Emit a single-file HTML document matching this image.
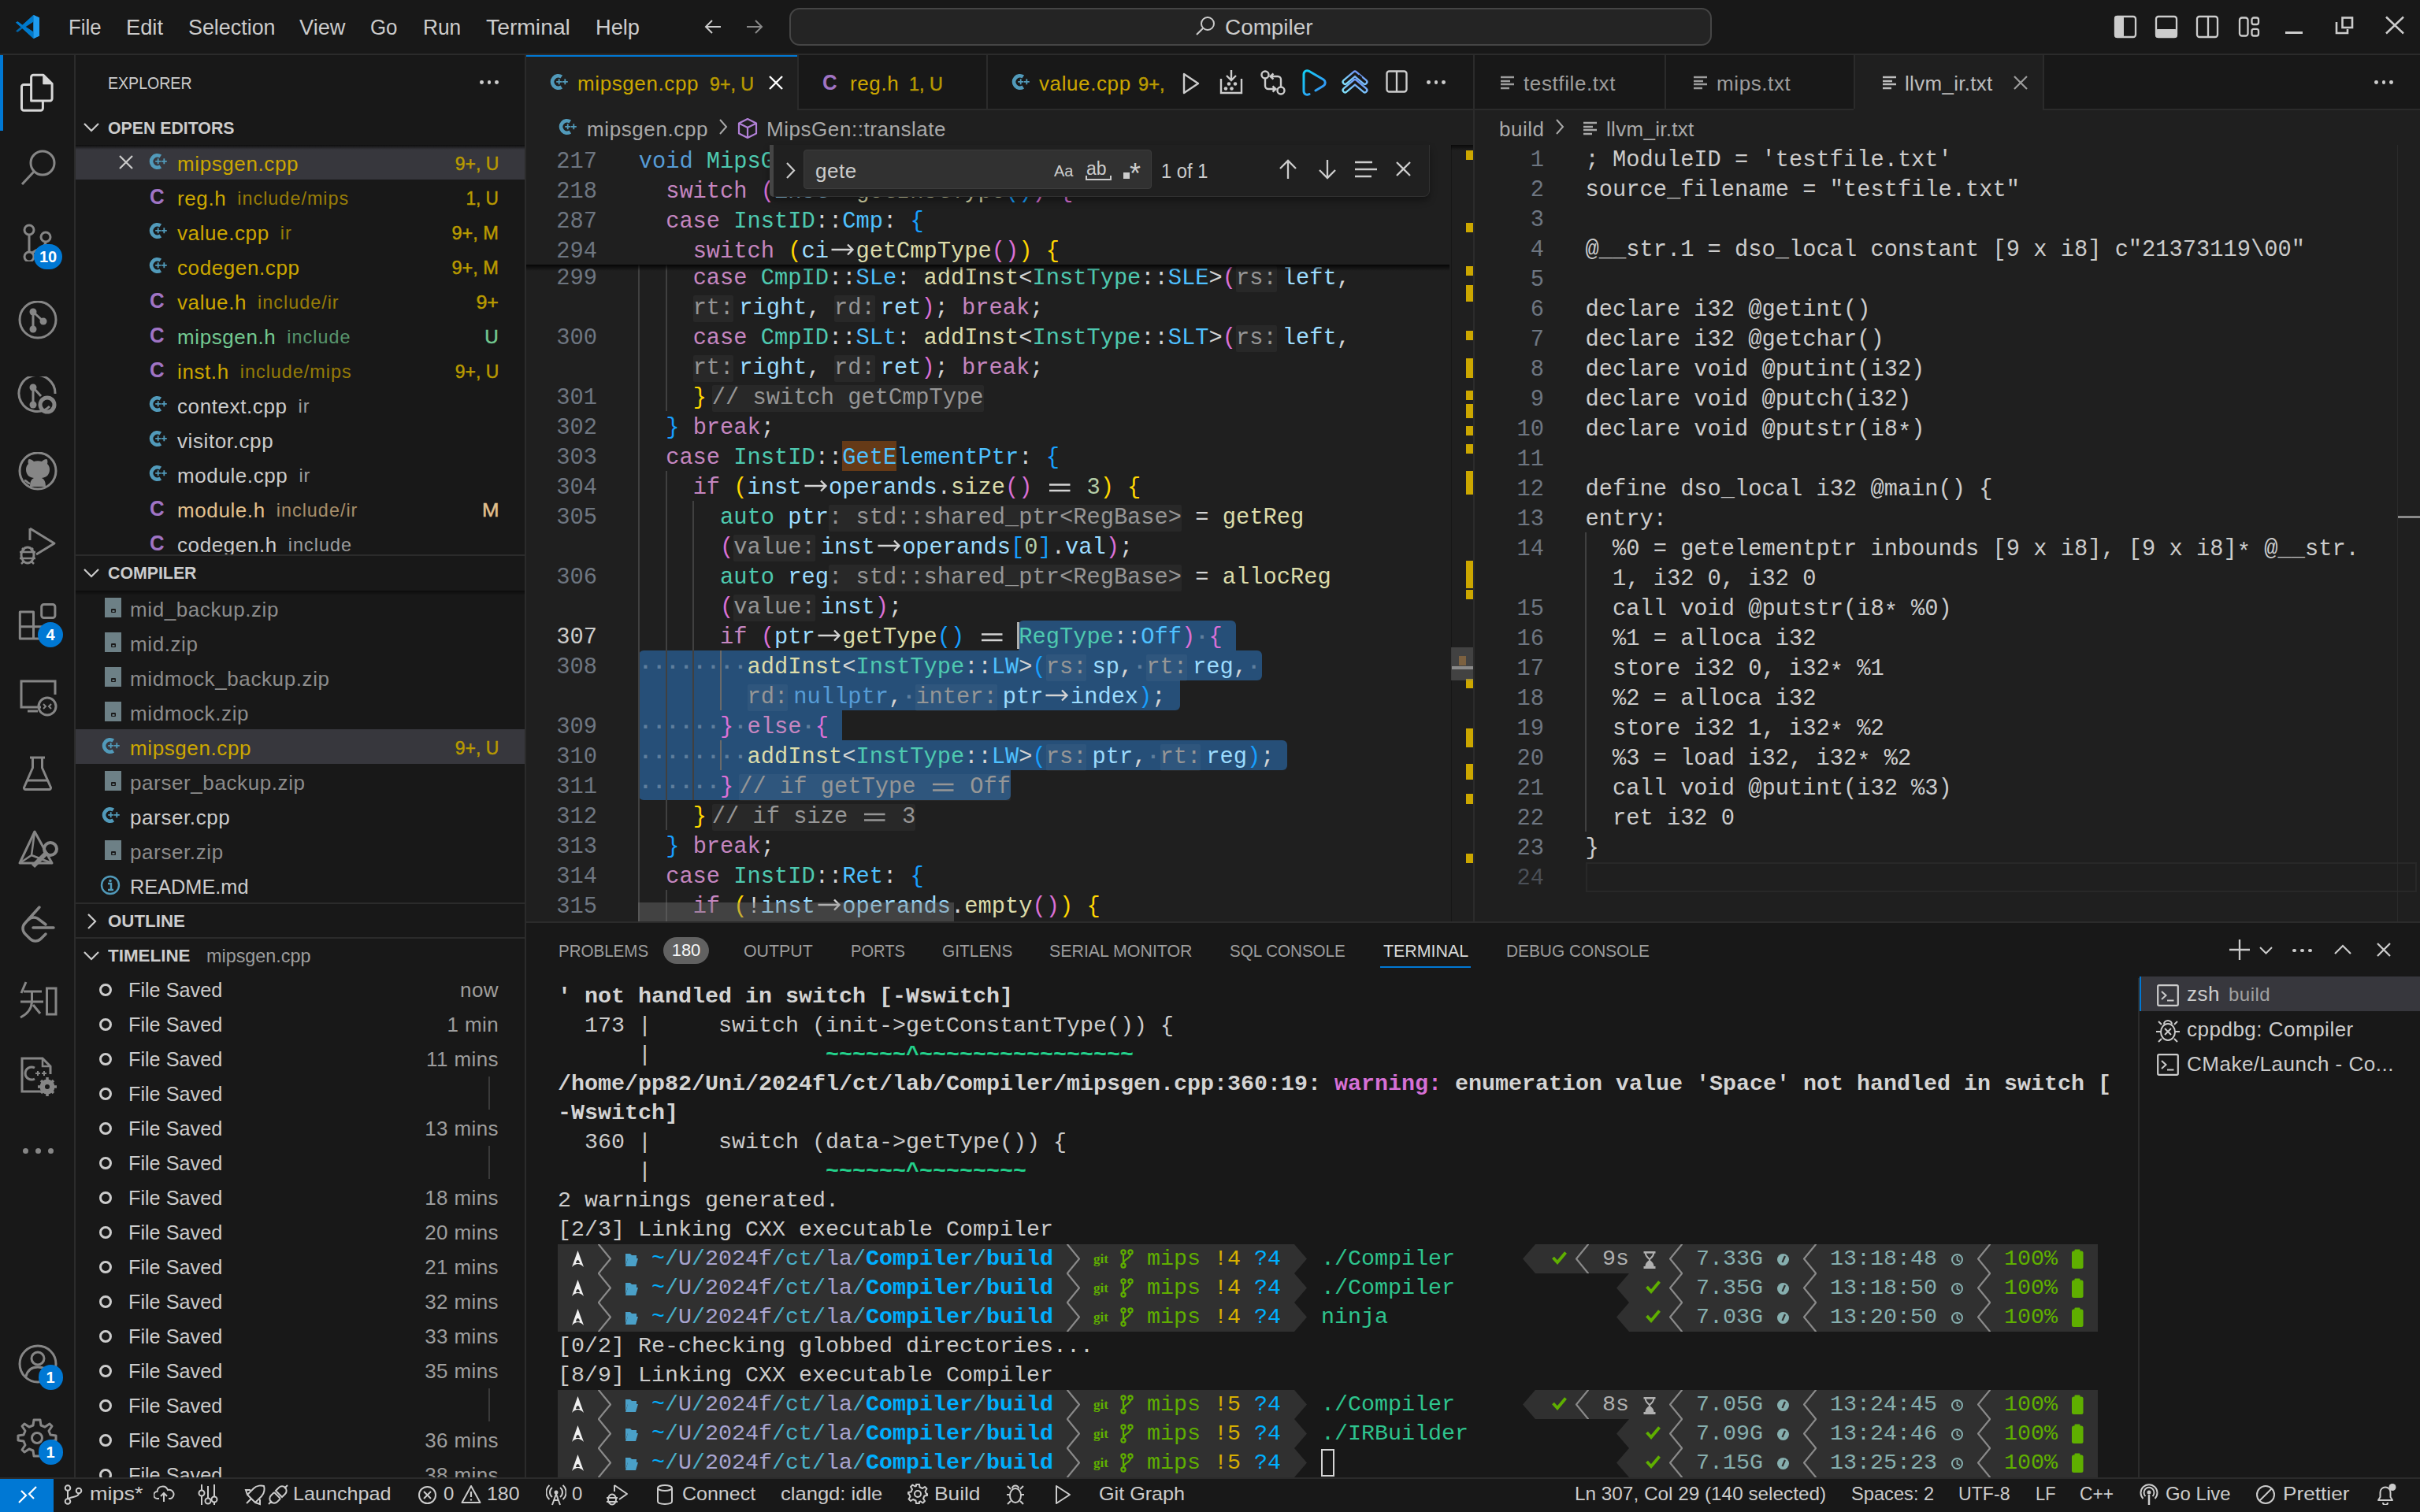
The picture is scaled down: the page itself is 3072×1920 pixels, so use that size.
<!DOCTYPE html>
<html><head><meta charset="utf-8"><title>VS Code</title><style>
html,body{margin:0;padding:0;}
body{width:3072px;height:1920px;position:relative;overflow:hidden;background:#181818;font-family:"Liberation Sans",sans-serif;}
.a{position:absolute;}
.t{white-space:pre;}
.cl{white-space:pre;font-family:"Liberation Mono",monospace;font-size:28.72px;line-height:38px;height:38px;color:#d4d4d4;padding-top:3px;box-sizing:border-box;}
.hlig{display:inline-block;width:34.46px;height:34px;vertical-align:top;position:relative;}
.hlig svg{position:absolute;left:0;top:-5px;}
.ast{position:relative;top:5px;}
.tl{white-space:pre;font-family:"Liberation Mono",monospace;font-size:28.33px;line-height:37px;height:37px;color:#cccccc;}
.kw{color:#c586c0}.ty{color:#4ec9b0}.en{color:#4fc1ff}.fn{color:#dcdcaa}.va{color:#9cdcfe}.nu{color:#b5cea8}.op{color:#d4d4d4}
.b1{color:#ffd700}.b2{color:#da70d6}.b3{color:#179fff}.bl{color:#569cd6}
.h{display:inline-block;height:34px;line-height:34px;background:rgba(255,255,255,0.045);color:#969696;border-radius:2px;vertical-align:baseline;position:relative;top:0px;}
.hp{margin-right:7px;}.hb{margin-left:7px;}
.ws{color:rgba(190,205,220,0.38);font-weight:bold;}
.lig{display:inline-block;width:34.46px;height:38px;vertical-align:top;position:relative;margin-top:-2px;}
.lig svg{position:absolute;left:0;top:0;}
</style></head><body>
<div class="a" style="left:0px;top:0px;width:3072px;height:68px;background:#181818;"></div>
<div class="a" style="left:0px;top:68px;width:3072px;height:2px;background:#2b2b2b;"></div>
<svg class="a" style="left:19px;top:18px;" width="32" height="32" viewBox="0 0 32 32" fill="none">
<path d="M23.5 1 L31 4.6 V27.4 L23.5 31 Z" fill="#1f9cf0"/>
<path d="M23.5 1 L9.5 13.8 L3.5 9.3 L1 10.6 L7.5 16 L1 21.4 L3.5 22.7 L9.5 18.2 L23.5 31 V22.5 L13.5 16 L23.5 9.5 Z" fill="#0065a9"/>
<path d="M23.5 1 L9.5 13.8 L3.5 9.3 L1 10.6 L23.5 31 V22.5 L13.5 16 L23.5 9.5Z" fill="#007acc"/>
<path d="M23.5 1 L31 4.6 V27.4 L23.5 31 Z" fill="#1f9cf0"/>
</svg>
<div class="a t" style="top:22.14px;font-size:27px;line-height:27px;color:#cccccc;left:87px;transform:scaleX(0.9539407522340029);transform-origin:left center;">File</div>
<div class="a t" style="top:22.14px;font-size:27px;line-height:27px;color:#cccccc;left:160px;transform:scaleX(1.0102231357218663);transform-origin:left center;">Edit</div>
<div class="a t" style="top:22.14px;font-size:27px;line-height:27px;color:#cccccc;left:239px;transform:scaleX(0.994894693379139);transform-origin:left center;">Selection</div>
<div class="a t" style="top:22.14px;font-size:27px;line-height:27px;color:#cccccc;left:380px;transform:scaleX(1.0080449743142386);transform-origin:left center;">View</div>
<div class="a t" style="top:22.14px;font-size:27px;line-height:27px;color:#cccccc;left:470px;transform:scaleX(0.957921726341546);transform-origin:left center;">Go</div>
<div class="a t" style="top:22.14px;font-size:27px;line-height:27px;color:#cccccc;left:537px;transform:scaleX(0.9731844280396239);transform-origin:left center;">Run</div>
<div class="a t" style="top:22.14px;font-size:27px;line-height:27px;color:#cccccc;left:617px;transform:scaleX(1.0478128958052872);transform-origin:left center;">Terminal</div>
<div class="a t" style="top:22.14px;font-size:27px;line-height:27px;color:#cccccc;left:756px;transform:scaleX(1.0085149729580667);transform-origin:left center;">Help</div>
<svg class="a" style="left:893px;top:22px;" width="24" height="24" viewBox="0 0 24 24" fill="none"><path d="M22 12H3 M11 4L3 12L11 20" stroke="#cccccc" stroke-width="2"/></svg>
<svg class="a" style="left:946px;top:22px;" width="24" height="24" viewBox="0 0 24 24" fill="none"><path d="M2 12H21 M13 4L21 12L13 20" stroke="#8a8a8a" stroke-width="2"/></svg>
<div class="a" style="left:1002px;top:10px;width:1171px;height:47.5px;box-sizing:border-box;background:#242424;border:2px solid #454545;border-radius:13px;"></div>
<svg class="a" style="left:1516px;top:19px;" width="28" height="28" viewBox="0 0 28 28" fill="none"><circle cx="17" cy="11" r="8" stroke="#cccccc" stroke-width="2"/><path d="M11 17L3 25" stroke="#cccccc" stroke-width="2"/></svg>
<div class="a t" style="top:22.14px;font-size:27px;line-height:27px;color:#cccccc;left:1555px;transform:scaleX(1.0322058047111746);transform-origin:left center;">Compiler</div>
<svg class="a" style="left:2683px;top:19px;" width="30" height="30" viewBox="0 0 30 30" fill="none"><rect x="2" y="2" width="26" height="26" rx="3" stroke="#cccccc" stroke-width="2.3"/><rect x="1" y="1" width="12" height="28" rx="3" fill="#cccccc"/></svg>
<svg class="a" style="left:2735px;top:19px;" width="30" height="30" viewBox="0 0 30 30" fill="none"><rect x="2" y="2" width="26" height="26" rx="3" stroke="#cccccc" stroke-width="2.3"/><rect x="1" y="18" width="28" height="11" rx="3" fill="#cccccc"/></svg>
<svg class="a" style="left:2787px;top:19px;" width="30" height="30" viewBox="0 0 30 30" fill="none"><rect x="2" y="2" width="26" height="26" rx="3" stroke="#cccccc" stroke-width="2.3"/><path d="M16 2V28" stroke="#cccccc" stroke-width="2.3"/></svg>
<svg class="a" style="left:2841px;top:21px;" width="28" height="28" viewBox="0 0 28 28" fill="none"><rect x="2" y="1.5" width="10.5" height="23" rx="3" stroke="#cccccc" stroke-width="2.3"/><rect x="17.5" y="1.5" width="8.5" height="8.5" rx="2.5" stroke="#cccccc" stroke-width="2.3"/><rect x="17.5" y="15.8" width="8.5" height="8.7" rx="2.5" stroke="#cccccc" stroke-width="2.3"/></svg>
<div class="a" style="left:2901px;top:40px;width:22px;height:3px;background:#cccccc;"></div>
<svg class="a" style="left:2964px;top:20px;" width="24" height="24" viewBox="0 0 24 24" fill="none"><rect x="9.5" y="2.5" width="12.5" height="12.5" stroke="#cccccc" stroke-width="2.6"/><path d="M2 8 V22 H16 V17" stroke="#cccccc" stroke-width="2.6" fill="none"/></svg>
<svg class="a" style="left:3028px;top:20px;" width="24" height="24" viewBox="0 0 24 24" fill="none"><path d="M1 1.5L23 22.5M23 1.5L1 22.5" stroke="#cccccc" stroke-width="2.6"/></svg>
<div class="a" style="left:0px;top:70px;width:94px;height:1806px;background:#181818;"></div>
<div class="a" style="left:94px;top:70px;width:2px;height:1806px;background:#2b2b2b;"></div>
<div class="a" style="left:0px;top:70px;width:4px;height:96px;background:#0078d4;"></div>
<svg class="a" style="left:22px;top:88px;" width="52" height="58" viewBox="0 0 52 58" fill="none"><path d="M17.6 40 V10 a2.7 2.7 0 0 1 2.7 -2.7 H33 L44.1 18.4 V37.3 a2.7 2.7 0 0 1 -2.7 2.7 Z" stroke="#d7d7d7" stroke-width="3" fill="none" stroke-linejoin="round"/><path d="M33 7.3 V18.4 H44.1 Z" fill="#d7d7d7" stroke="#d7d7d7" stroke-width="1.5" stroke-linejoin="round"/><path d="M17.6 19.4 H8.2 a2.7 2.7 0 0 0 -2.7 2.7 V49.5 a2.7 2.7 0 0 0 2.7 2.7 H29.7 a2.7 2.7 0 0 0 2.7 -2.7 V40" stroke="#d7d7d7" stroke-width="3" fill="none"/></svg>
<svg class="a" style="left:22px;top:186px;" width="52" height="52" viewBox="0 0 52 52" fill="none"><circle cx="32" cy="21" r="15" stroke="#868686" stroke-width="3"/><path d="M21 32 L6 48" stroke="#868686" stroke-width="3"/></svg>
<svg class="a" style="left:22px;top:280px;" width="52" height="52" viewBox="0 0 52 52" fill="none"><circle cx="15" cy="12" r="6" stroke="#868686" stroke-width="3"/><circle cx="36" cy="21" r="6" stroke="#868686" stroke-width="3"/><circle cx="15" cy="46" r="6" stroke="#868686" stroke-width="3"/><path d="M15 18 V40 M36 27 C36 35 24 36 18 42" stroke="#868686" stroke-width="3"/></svg>
<div class="a" style="left:43.0px;top:310px;width:36px;height:32px;border-radius:16px;background:#0078d4;color:#fff;font-size:20px;font-weight:bold;line-height:32px;text-align:center;">10</div>
<svg class="a" style="left:22px;top:382px;" width="52" height="52" viewBox="0 0 52 52" fill="none"><circle cx="26" cy="24" r="23" stroke="#868686" stroke-width="3"/><circle cx="20" cy="14" r="4.5" fill="#868686"/><circle cx="20" cy="36" r="4.5" fill="#868686"/><circle cx="33" cy="26" r="4.5" fill="#868686"/><path d="M20 14V36 M20 14 L33 26" stroke="#868686" stroke-width="3"/></svg>
<svg class="a" style="left:22px;top:478px;" width="52" height="52" viewBox="0 0 52 52" fill="none"><path d="M41 38 A23 23 0 1 1 48 22" stroke="#868686" stroke-width="3"/><circle cx="20" cy="14" r="4.5" fill="#868686"/><circle cx="20" cy="36" r="4.5" fill="#868686"/><path d="M20 14V36 M20 14 L30 25" stroke="#868686" stroke-width="3"/><circle cx="38" cy="36" r="9" stroke="#868686" stroke-width="5"/></svg>
<svg class="a" style="left:22px;top:574px;" width="52" height="52" viewBox="0 0 52 52" fill="none"><circle cx="26" cy="24" r="23" stroke="#868686" stroke-width="3"/><path d="M16 44 C16 36 19 34 21 33 C14 32 11 28 11 22 C11 19 12 17 14 15 C13 12 14 9 15 9 C17 9 19 10 21 12 C24 11 28 11 31 12 C33 10 35 9 37 9 C38 9 39 12 38 15 C40 17 41 19 41 22 C41 28 38 32 31 33 C33 34 36 36 36 44 Z" fill="#868686"/><path d="M9 36 C12 36 13 40 16 40" stroke="#868686" stroke-width="2.5"/></svg>
<svg class="a" style="left:22px;top:668px;" width="52" height="52" viewBox="0 0 52 52" fill="none"><path d="M16 3 L47 22 L24 36" stroke="#868686" stroke-width="3" fill="none" stroke-linejoin="round"/><path d="M16 3 V18" stroke="#868686" stroke-width="3"/><ellipse cx="13" cy="37" rx="8" ry="10" stroke="#868686" stroke-width="3"/><path d="M3 33H23 M3 41H23 M6 28 L9 31 M20 28 L17 31 M5 48 L8 45 M21 48 L18 45" stroke="#868686" stroke-width="2.5"/></svg>
<svg class="a" style="left:22px;top:764px;" width="52" height="52" viewBox="0 0 52 52" fill="none"><path d="M3.3 13 H20.5 V46.9 H3.3 Z M3.3 31.7 H40.5 V46.9 H20.5" stroke="#868686" stroke-width="3" fill="none" stroke-linejoin="round"/><rect x="30.7" y="3.5" width="17.2" height="17" rx="3" stroke="#868686" stroke-width="3"/></svg>
<div class="a" style="left:48.0px;top:790px;width:32px;height:32px;border-radius:16px;background:#0078d4;color:#fff;font-size:20px;font-weight:bold;line-height:32px;text-align:center;">4</div>
<svg class="a" style="left:22px;top:860px;" width="52" height="52" viewBox="0 0 52 52" fill="none"><path d="M30 38 H5 V5 H48 V22" stroke="#868686" stroke-width="3" fill="none"/><path d="M13 43 H26" stroke="#868686" stroke-width="3"/><circle cx="38" cy="37" r="11" stroke="#868686" stroke-width="3"/><path d="M33 34 L36 37 L33 40 M43 34 L40 37 L43 40" stroke="#868686" stroke-width="2"/></svg>
<svg class="a" style="left:22px;top:956px;" width="52" height="52" viewBox="0 0 52 52" fill="none"><path d="M16 6 H35 M19.5 6 V19 L8.5 44 a2 2 0 0 0 2 2.5 H40.5 a2 2 0 0 0 2 -2.5 L31.5 19 V6" stroke="#868686" stroke-width="3" fill="none" stroke-linejoin="round"/><path d="M13 35 H38" stroke="#868686" stroke-width="3"/></svg>
<svg class="a" style="left:22px;top:1052px;" width="52" height="52" viewBox="0 0 52 52" fill="none"><path d="M22 4 L3 44 H44 Z" stroke="#868686" stroke-width="3" fill="none" stroke-linejoin="round"/><path d="M22 4 L18 34 L3 44 M18 34 L44 44" stroke="#868686" stroke-width="2.5"/><path d="M20 48 L38 30" stroke="#868686" stroke-width="6"/><circle cx="42" cy="26" r="8" stroke="#868686" stroke-width="4"/></svg>
<svg class="a" style="left:22px;top:1148px;" width="52" height="52" viewBox="0 0 52 52" fill="none"><path d="M28 4 L10 24 C6 28 6 34 10 38 L16 44 C20 48 26 48 30 44 L36 38" stroke="#868686" stroke-width="3.5" fill="none" stroke-linecap="round"/><path d="M20 30 H46" stroke="#868686" stroke-width="3.5" stroke-linecap="round"/><path d="M14 20 C18 16 24 16 28 20 L36 26" stroke="#868686" stroke-width="3.5" fill="none" stroke-linecap="round"/></svg>
<svg class="a" style="left:22px;top:1242px;" width="52" height="52" viewBox="0 0 52 52" fill="none"><path d="M11 5 L5 19 M8 17 H31 M4 30 H33 M18.5 17 V30 C18 39 12 46 4 50 M20 34 L29 45" stroke="#868686" stroke-width="3" fill="none"/><path d="M37.5 13 H49 V46 H37.5 Z" stroke="#868686" stroke-width="3" fill="none"/></svg>
<svg class="a" style="left:22px;top:1340px;" width="52" height="52" viewBox="0 0 52 52" fill="none"><path d="M30 46 H6 V4 H32 L42 14 V24" stroke="#868686" stroke-width="3" fill="none"/><path d="M32 4 V14 H42" stroke="#868686" stroke-width="2.5"/><path d="M22 16 A8 8 0 1 0 22 30" stroke="#868686" stroke-width="3" fill="none"/><path d="M23 23 H29 M26 20V26 M31 23H37 M34 20V26" stroke="#868686" stroke-width="2"/><circle cx="38" cy="40" r="7" stroke="#868686" stroke-width="5"/><path d="M38 28V52 M26 40H50 M30 32 L46 48 M46 32 L30 48" stroke="#868686" stroke-width="3.5"/><circle cx="38" cy="40" r="3" fill="#181818"/></svg>
<div class="a" style="left:28.5px;top:1458px;width:7px;height:7px;border-radius:50%;background:#868686;"></div>
<div class="a" style="left:44.5px;top:1458px;width:7px;height:7px;border-radius:50%;background:#868686;"></div>
<div class="a" style="left:60.5px;top:1458px;width:7px;height:7px;border-radius:50%;background:#868686;"></div>
<svg class="a" style="left:22px;top:1706px;" width="52" height="52" viewBox="0 0 52 52" fill="none"><circle cx="26" cy="26" r="23" stroke="#868686" stroke-width="3"/><circle cx="26" cy="19" r="8" stroke="#868686" stroke-width="3"/><path d="M11 42 C13 33 19 30 26 30 C33 30 39 33 41 42" stroke="#868686" stroke-width="3" fill="none"/></svg>
<div class="a" style="left:48.5px;top:1732.5px;width:31px;height:32px;border-radius:16px;background:#0078d4;color:#fff;font-size:20px;font-weight:bold;line-height:32px;text-align:center;">1</div>
<svg class="a" style="left:20px;top:1800px;" width="54" height="54" viewBox="0 0 54 54" fill="none"><path d="M27 3 L31 3 L32 10 L37 12 L43 8 L46 11 L42 17 L44 22 L51 23 L51 29 L44 30 L42 35 L46 41 L43 44 L37 40 L32 42 L31 49 L23 49 L22 42 L17 40 L11 44 L8 41 L12 35 L10 30 L3 29 L3 23 L10 22 L12 17 L8 11 L11 8 L17 12 L22 10 L23 3 Z" stroke="#868686" stroke-width="3" fill="none" stroke-linejoin="round"/><circle cx="27" cy="26" r="6.5" stroke="#868686" stroke-width="3"/></svg>
<div class="a" style="left:48.5px;top:1827.5px;width:31px;height:32px;border-radius:16px;background:#0078d4;color:#fff;font-size:20px;font-weight:bold;line-height:32px;text-align:center;">1</div>
<div class="a" style="left:96px;top:70px;width:570px;height:1806px;background:#181818;"></div>
<div class="a" style="left:666px;top:70px;width:2px;height:1806px;background:#2b2b2b;"></div>
<div class="a t" style="top:95.38px;font-size:22px;line-height:22px;color:#cccccc;left:137px;transform:scaleX(0.8888262954877982);transform-origin:left center;">EXPLORER</div>
<div class="a" style="left:609.0px;top:102px;width:4.8px;height:4.8px;border-radius:50%;background:#cccccc;"></div>
<div class="a" style="left:618.5px;top:102px;width:4.8px;height:4.8px;border-radius:50%;background:#cccccc;"></div>
<div class="a" style="left:628.0px;top:102px;width:4.8px;height:4.8px;border-radius:50%;background:#cccccc;"></div>
<svg class="a" style="left:106px;top:156px;" width="20" height="12" viewBox="0 0 20 12" fill="none"><path d="M1 1 L10 10 L19 1" stroke="#cccccc" stroke-width="2.2" fill="none"/></svg>
<div class="a t" style="top:152.38px;font-size:22px;line-height:22px;color:#cccccc;font-weight:bold;left:137px;transform:scaleX(0.9677474058679107);transform-origin:left center;">OPEN EDITORS</div>
<div class="a" style="left:96px;top:184px;width:570px;height:520px;overflow:hidden;">
<div class="a" style="left:-96px;top:-184px;width:3072px;height:1920px;">
<div class="a" style="left:96px;top:184px;width:570px;height:44px;background:#37373d;"></div>
<svg class="a" style="left:188px;top:194px;" width="26.0" height="24.0" viewBox="0 0 26 24" fill="none"><path d="M15.8 4.6 A7.6 7.6 0 1 0 15.8 17.4" stroke="#519aba" stroke-width="4.8" fill="none"/><path d="M9.2 10.8 H16.2 M12.7 7.3 V14.3 M16.8 10.8 H23.8 M20.3 7.3 V14.3" stroke="#519aba" stroke-width="1.8"/></svg>
<svg class="a" style="left:151px;top:197px;" width="18" height="18" viewBox="0 0 18 18" fill="none"><path d="M1 1L17 17M17 1L1 17" stroke="#cccccc" stroke-width="2.2"/></svg>
<div class="a t" style="top:194.79px;font-size:26px;line-height:26px;color:#cca700;left:225px;letter-spacing:0.6px;">mipsgen.cpp</div>
<div class="a t" style="top:196.06px;font-size:24.5px;line-height:24.5px;color:#b89a00;right:2439px;transform:scaleX(0.9368632751969932);transform-origin:right center;-webkit-text-stroke:0.5px #b89a00;">9+, U</div>
<div class="a" style="left:190px;top:236px;font-size:28px;line-height:28px;font-weight:bold;color:#a074c4;transform:scaleX(0.92);transform-origin:left center;">C</div>
<div class="a t" style="top:238.79px;font-size:26px;line-height:26px;color:#cca700;left:225px;letter-spacing:0.6px;">reg.h</div>
<div class="a t" style="left:225px;top:237.79px;font-size:26px;line-height:26px;color:transparent;letter-spacing:0.6px;">reg.h<span style="color:#cca700;opacity:0.7;;font-size:23.4px;letter-spacing:1.0px;margin-left:14px;">include/mips</span></div>
<div class="a t" style="top:240.06px;font-size:24.5px;line-height:24.5px;color:#b89a00;right:2439px;transform:scaleX(0.9236445707191456);transform-origin:right center;-webkit-text-stroke:0.5px #b89a00;">1, U</div>
<svg class="a" style="left:188px;top:282px;" width="26.0" height="24.0" viewBox="0 0 26 24" fill="none"><path d="M15.8 4.6 A7.6 7.6 0 1 0 15.8 17.4" stroke="#519aba" stroke-width="4.8" fill="none"/><path d="M9.2 10.8 H16.2 M12.7 7.3 V14.3 M16.8 10.8 H23.8 M20.3 7.3 V14.3" stroke="#519aba" stroke-width="1.8"/></svg>
<div class="a t" style="top:282.79px;font-size:26px;line-height:26px;color:#cca700;left:225px;letter-spacing:0.6px;">value.cpp</div>
<div class="a t" style="left:225px;top:281.79px;font-size:26px;line-height:26px;color:transparent;letter-spacing:0.6px;">value.cpp<span style="color:#cca700;opacity:0.7;;font-size:23.4px;letter-spacing:1.0px;margin-left:14px;">ir</span></div>
<div class="a t" style="top:284.06px;font-size:24.5px;line-height:24.5px;color:#b89a00;right:2439px;transform:scaleX(0.9603841536614646);transform-origin:right center;-webkit-text-stroke:0.5px #b89a00;">9+, M</div>
<svg class="a" style="left:188px;top:326px;" width="26.0" height="24.0" viewBox="0 0 26 24" fill="none"><path d="M15.8 4.6 A7.6 7.6 0 1 0 15.8 17.4" stroke="#519aba" stroke-width="4.8" fill="none"/><path d="M9.2 10.8 H16.2 M12.7 7.3 V14.3 M16.8 10.8 H23.8 M20.3 7.3 V14.3" stroke="#519aba" stroke-width="1.8"/></svg>
<div class="a t" style="top:326.79px;font-size:26px;line-height:26px;color:#cca700;left:225px;letter-spacing:0.6px;">codegen.cpp</div>
<div class="a t" style="top:328.06px;font-size:24.5px;line-height:24.5px;color:#b89a00;right:2439px;transform:scaleX(0.9603841536614646);transform-origin:right center;-webkit-text-stroke:0.5px #b89a00;">9+, M</div>
<div class="a" style="left:190px;top:368px;font-size:28px;line-height:28px;font-weight:bold;color:#a074c4;transform:scaleX(0.92);transform-origin:left center;">C</div>
<div class="a t" style="top:370.79px;font-size:26px;line-height:26px;color:#cca700;left:225px;letter-spacing:0.6px;">value.h</div>
<div class="a t" style="left:225px;top:369.79px;font-size:26px;line-height:26px;color:transparent;letter-spacing:0.6px;">value.h<span style="color:#cca700;opacity:0.7;;font-size:23.4px;letter-spacing:1.0px;margin-left:14px;">include/ir</span></div>
<div class="a t" style="top:372.06px;font-size:24.5px;line-height:24.5px;color:#b89a00;right:2439px;transform:scaleX(1.0202683238568826);transform-origin:right center;-webkit-text-stroke:0.5px #b89a00;">9+</div>
<div class="a" style="left:190px;top:412px;font-size:28px;line-height:28px;font-weight:bold;color:#a074c4;transform:scaleX(0.92);transform-origin:left center;">C</div>
<div class="a t" style="top:414.79px;font-size:26px;line-height:26px;color:#73c991;left:225px;letter-spacing:0.6px;">mipsgen.h</div>
<div class="a t" style="left:225px;top:413.79px;font-size:26px;line-height:26px;color:transparent;letter-spacing:0.6px;">mipsgen.h<span style="color:#73c991;opacity:0.7;;font-size:23.4px;letter-spacing:1.0px;margin-left:14px;">include</span></div>
<div class="a t" style="top:416.06px;font-size:24.5px;line-height:24.5px;color:#73c991;right:2439px;transform:scaleX(0.9890585399023304);transform-origin:right center;-webkit-text-stroke:0.5px #73c991;">U</div>
<div class="a" style="left:190px;top:456px;font-size:28px;line-height:28px;font-weight:bold;color:#a074c4;transform:scaleX(0.92);transform-origin:left center;">C</div>
<div class="a t" style="top:458.79px;font-size:26px;line-height:26px;color:#cca700;left:225px;letter-spacing:0.6px;">inst.h</div>
<div class="a t" style="left:225px;top:457.79px;font-size:26px;line-height:26px;color:transparent;letter-spacing:0.6px;">inst.h<span style="color:#cca700;opacity:0.7;;font-size:23.4px;letter-spacing:1.0px;margin-left:14px;">include/mips</span></div>
<div class="a t" style="top:460.06px;font-size:24.5px;line-height:24.5px;color:#b89a00;right:2439px;transform:scaleX(0.9368632751969932);transform-origin:right center;-webkit-text-stroke:0.5px #b89a00;">9+, U</div>
<svg class="a" style="left:188px;top:502px;" width="26.0" height="24.0" viewBox="0 0 26 24" fill="none"><path d="M15.8 4.6 A7.6 7.6 0 1 0 15.8 17.4" stroke="#519aba" stroke-width="4.8" fill="none"/><path d="M9.2 10.8 H16.2 M12.7 7.3 V14.3 M16.8 10.8 H23.8 M20.3 7.3 V14.3" stroke="#519aba" stroke-width="1.8"/></svg>
<div class="a t" style="top:502.79px;font-size:26px;line-height:26px;color:#cccccc;left:225px;letter-spacing:0.6px;">context.cpp</div>
<div class="a t" style="left:225px;top:501.79px;font-size:26px;line-height:26px;color:transparent;letter-spacing:0.6px;">context.cpp<span style="color:#9d9d9d;;font-size:23.4px;letter-spacing:1.0px;margin-left:14px;">ir</span></div>
<svg class="a" style="left:188px;top:546px;" width="26.0" height="24.0" viewBox="0 0 26 24" fill="none"><path d="M15.8 4.6 A7.6 7.6 0 1 0 15.8 17.4" stroke="#519aba" stroke-width="4.8" fill="none"/><path d="M9.2 10.8 H16.2 M12.7 7.3 V14.3 M16.8 10.8 H23.8 M20.3 7.3 V14.3" stroke="#519aba" stroke-width="1.8"/></svg>
<div class="a t" style="top:546.79px;font-size:26px;line-height:26px;color:#cccccc;left:225px;letter-spacing:0.6px;">visitor.cpp</div>
<svg class="a" style="left:188px;top:590px;" width="26.0" height="24.0" viewBox="0 0 26 24" fill="none"><path d="M15.8 4.6 A7.6 7.6 0 1 0 15.8 17.4" stroke="#519aba" stroke-width="4.8" fill="none"/><path d="M9.2 10.8 H16.2 M12.7 7.3 V14.3 M16.8 10.8 H23.8 M20.3 7.3 V14.3" stroke="#519aba" stroke-width="1.8"/></svg>
<div class="a t" style="top:590.79px;font-size:26px;line-height:26px;color:#cccccc;left:225px;letter-spacing:0.6px;">module.cpp</div>
<div class="a t" style="left:225px;top:589.79px;font-size:26px;line-height:26px;color:transparent;letter-spacing:0.6px;">module.cpp<span style="color:#9d9d9d;;font-size:23.4px;letter-spacing:1.0px;margin-left:14px;">ir</span></div>
<div class="a" style="left:190px;top:632px;font-size:28px;line-height:28px;font-weight:bold;color:#a074c4;transform:scaleX(0.92);transform-origin:left center;">C</div>
<div class="a t" style="top:634.79px;font-size:26px;line-height:26px;color:#e2c08d;left:225px;letter-spacing:0.6px;">module.h</div>
<div class="a t" style="left:225px;top:633.79px;font-size:26px;line-height:26px;color:transparent;letter-spacing:0.6px;">module.h<span style="color:#e2c08d;opacity:0.7;;font-size:23.4px;letter-spacing:1.0px;margin-left:14px;">include/ir</span></div>
<div class="a t" style="top:636.06px;font-size:24.5px;line-height:24.5px;color:#e2c08d;right:2439px;transform:scaleX(1.0535221404262323);transform-origin:right center;-webkit-text-stroke:0.5px #e2c08d;">M</div>
<div class="a" style="left:190px;top:676px;font-size:28px;line-height:28px;font-weight:bold;color:#a074c4;transform:scaleX(0.92);transform-origin:left center;">C</div>
<div class="a t" style="top:678.79px;font-size:26px;line-height:26px;color:#cccccc;left:225px;letter-spacing:0.6px;">codegen.h</div>
<div class="a t" style="left:225px;top:677.79px;font-size:26px;line-height:26px;color:transparent;letter-spacing:0.6px;">codegen.h<span style="color:#9d9d9d;;font-size:23.4px;letter-spacing:1.0px;margin-left:14px;">include</span></div>
</div></div>
<div class="a" style="left:96px;top:184px;width:570px;height:6px;background:linear-gradient(#0c0c0c,rgba(0,0,0,0));"></div>
<div class="a" style="left:96px;top:704px;width:570px;height:2px;background:#2b2b2b;"></div>
<svg class="a" style="left:106px;top:722px;" width="20" height="12" viewBox="0 0 20 12" fill="none"><path d="M1 1 L10 10 L19 1" stroke="#cccccc" stroke-width="2.2" fill="none"/></svg>
<div class="a t" style="top:717.38px;font-size:22px;line-height:22px;color:#cccccc;font-weight:bold;left:137px;transform:scaleX(0.9688931472340793);transform-origin:left center;">COMPILER</div>
<div class="a" style="left:96px;top:926px;width:570px;height:44px;background:#37373d;"></div>
<svg class="a" style="left:133px;top:759px;" width="22" height="26" viewBox="0 0 22 26" fill="none"><rect x="0" y="0" width="21" height="25" fill="#6d8086"/><rect x="8" y="14" width="6" height="5" rx="1" fill="#1a1a1a"/><rect x="9.5" y="16" width="3" height="2" fill="#6d8086"/></svg>
<div class="a t" style="top:760.79px;font-size:26px;line-height:26px;color:#8c8c8c;left:165px;letter-spacing:0.6px;">mid_backup.zip</div>
<svg class="a" style="left:133px;top:803px;" width="22" height="26" viewBox="0 0 22 26" fill="none"><rect x="0" y="0" width="21" height="25" fill="#6d8086"/><rect x="8" y="14" width="6" height="5" rx="1" fill="#1a1a1a"/><rect x="9.5" y="16" width="3" height="2" fill="#6d8086"/></svg>
<div class="a t" style="top:804.79px;font-size:26px;line-height:26px;color:#8c8c8c;left:165px;letter-spacing:0.6px;">mid.zip</div>
<svg class="a" style="left:133px;top:847px;" width="22" height="26" viewBox="0 0 22 26" fill="none"><rect x="0" y="0" width="21" height="25" fill="#6d8086"/><rect x="8" y="14" width="6" height="5" rx="1" fill="#1a1a1a"/><rect x="9.5" y="16" width="3" height="2" fill="#6d8086"/></svg>
<div class="a t" style="top:848.79px;font-size:26px;line-height:26px;color:#8c8c8c;left:165px;letter-spacing:0.6px;">midmock_backup.zip</div>
<svg class="a" style="left:133px;top:891px;" width="22" height="26" viewBox="0 0 22 26" fill="none"><rect x="0" y="0" width="21" height="25" fill="#6d8086"/><rect x="8" y="14" width="6" height="5" rx="1" fill="#1a1a1a"/><rect x="9.5" y="16" width="3" height="2" fill="#6d8086"/></svg>
<div class="a t" style="top:892.79px;font-size:26px;line-height:26px;color:#8c8c8c;left:165px;letter-spacing:0.6px;">midmock.zip</div>
<svg class="a" style="left:128px;top:936px;" width="26.0" height="24.0" viewBox="0 0 26 24" fill="none"><path d="M15.8 4.6 A7.6 7.6 0 1 0 15.8 17.4" stroke="#519aba" stroke-width="4.8" fill="none"/><path d="M9.2 10.8 H16.2 M12.7 7.3 V14.3 M16.8 10.8 H23.8 M20.3 7.3 V14.3" stroke="#519aba" stroke-width="1.8"/></svg>
<div class="a t" style="top:936.79px;font-size:26px;line-height:26px;color:#cca700;left:165px;letter-spacing:0.6px;">mipsgen.cpp</div>
<div class="a t" style="top:938.06px;font-size:24.5px;line-height:24.5px;color:#b89a00;right:2439px;transform:scaleX(0.9368632751969932);transform-origin:right center;-webkit-text-stroke:0.5px #b89a00;">9+, U</div>
<svg class="a" style="left:133px;top:979px;" width="22" height="26" viewBox="0 0 22 26" fill="none"><rect x="0" y="0" width="21" height="25" fill="#6d8086"/><rect x="8" y="14" width="6" height="5" rx="1" fill="#1a1a1a"/><rect x="9.5" y="16" width="3" height="2" fill="#6d8086"/></svg>
<div class="a t" style="top:980.79px;font-size:26px;line-height:26px;color:#8c8c8c;left:165px;letter-spacing:0.6px;">parser_backup.zip</div>
<svg class="a" style="left:128px;top:1024px;" width="26.0" height="24.0" viewBox="0 0 26 24" fill="none"><path d="M15.8 4.6 A7.6 7.6 0 1 0 15.8 17.4" stroke="#519aba" stroke-width="4.8" fill="none"/><path d="M9.2 10.8 H16.2 M12.7 7.3 V14.3 M16.8 10.8 H23.8 M20.3 7.3 V14.3" stroke="#519aba" stroke-width="1.8"/></svg>
<div class="a t" style="top:1024.79px;font-size:26px;line-height:26px;color:#cccccc;left:165px;letter-spacing:0.6px;">parser.cpp</div>
<svg class="a" style="left:133px;top:1067px;" width="22" height="26" viewBox="0 0 22 26" fill="none"><rect x="0" y="0" width="21" height="25" fill="#6d8086"/><rect x="8" y="14" width="6" height="5" rx="1" fill="#1a1a1a"/><rect x="9.5" y="16" width="3" height="2" fill="#6d8086"/></svg>
<div class="a t" style="top:1068.79px;font-size:26px;line-height:26px;color:#8c8c8c;left:165px;letter-spacing:0.6px;">parser.zip</div>
<svg class="a" style="left:127px;top:1111px;" width="26" height="26" viewBox="0 0 26 26" fill="none"><circle cx="13" cy="13" r="11" stroke="#519aba" stroke-width="2.4"/><circle cx="13" cy="7.5" r="1.8" fill="#519aba"/><path d="M10 11H14V19 M10 19H17" stroke="#519aba" stroke-width="2.4"/></svg>
<div class="a t" style="top:1112.79px;font-size:26px;line-height:26px;color:#cccccc;left:165px;transform:scaleX(0.9736177094915597);transform-origin:left center;">README.md</div>
<div class="a" style="left:96px;top:750px;width:570px;height:6px;background:linear-gradient(#0c0c0c,rgba(0,0,0,0));"></div>
<div class="a" style="left:96px;top:1146px;width:570px;height:2px;background:#2b2b2b;"></div>
<svg class="a" style="left:111px;top:1160px;" width="12" height="20" viewBox="0 0 12 20" fill="none"><path d="M1 1 L10 10.0 L1 19" stroke="#cccccc" stroke-width="2.2" fill="none"/></svg>
<div class="a t" style="top:1159.38px;font-size:22px;line-height:22px;color:#cccccc;font-weight:bold;left:137px;transform:scaleX(1.0139922384021078);transform-origin:left center;">OUTLINE</div>
<div class="a" style="left:96px;top:1190px;width:570px;height:2px;background:#2b2b2b;"></div>
<svg class="a" style="left:106px;top:1208px;" width="20" height="12" viewBox="0 0 20 12" fill="none"><path d="M1 1 L10 10 L19 1" stroke="#cccccc" stroke-width="2.2" fill="none"/></svg>
<div class="a t" style="top:1203.38px;font-size:22px;line-height:22px;color:#cccccc;font-weight:bold;left:137px;transform:scaleX(1.0179139460907416);transform-origin:left center;">TIMELINE</div>
<div class="a t" style="top:1201.68px;font-size:24px;line-height:24px;color:#9d9d9d;left:262px;transform:scaleX(0.9737724495889027);transform-origin:left center;">mipsgen.cpp</div>
<div class="a" style="left:96px;top:1234px;width:570px;height:642px;overflow:hidden;"><div class="a" style="left:-96px;top:-1234px;width:3072px;height:1920px;">
<svg class="a" style="left:125px;top:1248px;" width="18" height="18" viewBox="0 0 18 18" fill="none"><circle cx="9" cy="9" r="6.5" stroke="#cccccc" stroke-width="3"/></svg>
<div class="a t" style="top:1244.49px;font-size:26px;line-height:26px;color:#cccccc;left:163px;transform:scaleX(0.9704173323699716);transform-origin:left center;">File Saved</div>
<div class="a t" style="top:1244.49px;font-size:26px;line-height:26px;color:#9d9d9d;right:2439px;letter-spacing:0.4px;">now</div>
<svg class="a" style="left:125px;top:1292px;" width="18" height="18" viewBox="0 0 18 18" fill="none"><circle cx="9" cy="9" r="6.5" stroke="#cccccc" stroke-width="3"/></svg>
<div class="a t" style="top:1288.49px;font-size:26px;line-height:26px;color:#cccccc;left:163px;transform:scaleX(0.9704173323699716);transform-origin:left center;">File Saved</div>
<div class="a t" style="top:1288.49px;font-size:26px;line-height:26px;color:#9d9d9d;right:2439px;letter-spacing:0.4px;">1 min</div>
<svg class="a" style="left:125px;top:1336px;" width="18" height="18" viewBox="0 0 18 18" fill="none"><circle cx="9" cy="9" r="6.5" stroke="#cccccc" stroke-width="3"/></svg>
<div class="a t" style="top:1332.49px;font-size:26px;line-height:26px;color:#cccccc;left:163px;transform:scaleX(0.9704173323699716);transform-origin:left center;">File Saved</div>
<div class="a t" style="top:1332.49px;font-size:26px;line-height:26px;color:#9d9d9d;right:2439px;letter-spacing:0.4px;">11 mins</div>
<svg class="a" style="left:125px;top:1380px;" width="18" height="18" viewBox="0 0 18 18" fill="none"><circle cx="9" cy="9" r="6.5" stroke="#cccccc" stroke-width="3"/></svg>
<div class="a t" style="top:1376.49px;font-size:26px;line-height:26px;color:#cccccc;left:163px;transform:scaleX(0.9704173323699716);transform-origin:left center;">File Saved</div>
<div class="a" style="left:620px;top:1367px;width:2px;height:42px;background:#3a3a3a;"></div>
<svg class="a" style="left:125px;top:1424px;" width="18" height="18" viewBox="0 0 18 18" fill="none"><circle cx="9" cy="9" r="6.5" stroke="#cccccc" stroke-width="3"/></svg>
<div class="a t" style="top:1420.49px;font-size:26px;line-height:26px;color:#cccccc;left:163px;transform:scaleX(0.9704173323699716);transform-origin:left center;">File Saved</div>
<div class="a t" style="top:1420.49px;font-size:26px;line-height:26px;color:#9d9d9d;right:2439px;letter-spacing:0.4px;">13 mins</div>
<svg class="a" style="left:125px;top:1468px;" width="18" height="18" viewBox="0 0 18 18" fill="none"><circle cx="9" cy="9" r="6.5" stroke="#cccccc" stroke-width="3"/></svg>
<div class="a t" style="top:1464.49px;font-size:26px;line-height:26px;color:#cccccc;left:163px;transform:scaleX(0.9704173323699716);transform-origin:left center;">File Saved</div>
<div class="a" style="left:620px;top:1455px;width:2px;height:42px;background:#3a3a3a;"></div>
<svg class="a" style="left:125px;top:1512px;" width="18" height="18" viewBox="0 0 18 18" fill="none"><circle cx="9" cy="9" r="6.5" stroke="#cccccc" stroke-width="3"/></svg>
<div class="a t" style="top:1508.49px;font-size:26px;line-height:26px;color:#cccccc;left:163px;transform:scaleX(0.9704173323699716);transform-origin:left center;">File Saved</div>
<div class="a t" style="top:1508.49px;font-size:26px;line-height:26px;color:#9d9d9d;right:2439px;letter-spacing:0.4px;">18 mins</div>
<svg class="a" style="left:125px;top:1556px;" width="18" height="18" viewBox="0 0 18 18" fill="none"><circle cx="9" cy="9" r="6.5" stroke="#cccccc" stroke-width="3"/></svg>
<div class="a t" style="top:1552.49px;font-size:26px;line-height:26px;color:#cccccc;left:163px;transform:scaleX(0.9704173323699716);transform-origin:left center;">File Saved</div>
<div class="a t" style="top:1552.49px;font-size:26px;line-height:26px;color:#9d9d9d;right:2439px;letter-spacing:0.4px;">20 mins</div>
<svg class="a" style="left:125px;top:1600px;" width="18" height="18" viewBox="0 0 18 18" fill="none"><circle cx="9" cy="9" r="6.5" stroke="#cccccc" stroke-width="3"/></svg>
<div class="a t" style="top:1596.49px;font-size:26px;line-height:26px;color:#cccccc;left:163px;transform:scaleX(0.9704173323699716);transform-origin:left center;">File Saved</div>
<div class="a t" style="top:1596.49px;font-size:26px;line-height:26px;color:#9d9d9d;right:2439px;letter-spacing:0.4px;">21 mins</div>
<svg class="a" style="left:125px;top:1644px;" width="18" height="18" viewBox="0 0 18 18" fill="none"><circle cx="9" cy="9" r="6.5" stroke="#cccccc" stroke-width="3"/></svg>
<div class="a t" style="top:1640.49px;font-size:26px;line-height:26px;color:#cccccc;left:163px;transform:scaleX(0.9704173323699716);transform-origin:left center;">File Saved</div>
<div class="a t" style="top:1640.49px;font-size:26px;line-height:26px;color:#9d9d9d;right:2439px;letter-spacing:0.4px;">32 mins</div>
<svg class="a" style="left:125px;top:1688px;" width="18" height="18" viewBox="0 0 18 18" fill="none"><circle cx="9" cy="9" r="6.5" stroke="#cccccc" stroke-width="3"/></svg>
<div class="a t" style="top:1684.49px;font-size:26px;line-height:26px;color:#cccccc;left:163px;transform:scaleX(0.9704173323699716);transform-origin:left center;">File Saved</div>
<div class="a t" style="top:1684.49px;font-size:26px;line-height:26px;color:#9d9d9d;right:2439px;letter-spacing:0.4px;">33 mins</div>
<svg class="a" style="left:125px;top:1732px;" width="18" height="18" viewBox="0 0 18 18" fill="none"><circle cx="9" cy="9" r="6.5" stroke="#cccccc" stroke-width="3"/></svg>
<div class="a t" style="top:1728.49px;font-size:26px;line-height:26px;color:#cccccc;left:163px;transform:scaleX(0.9704173323699716);transform-origin:left center;">File Saved</div>
<div class="a t" style="top:1728.49px;font-size:26px;line-height:26px;color:#9d9d9d;right:2439px;letter-spacing:0.4px;">35 mins</div>
<svg class="a" style="left:125px;top:1776px;" width="18" height="18" viewBox="0 0 18 18" fill="none"><circle cx="9" cy="9" r="6.5" stroke="#cccccc" stroke-width="3"/></svg>
<div class="a t" style="top:1772.49px;font-size:26px;line-height:26px;color:#cccccc;left:163px;transform:scaleX(0.9704173323699716);transform-origin:left center;">File Saved</div>
<div class="a" style="left:620px;top:1763px;width:2px;height:42px;background:#3a3a3a;"></div>
<svg class="a" style="left:125px;top:1820px;" width="18" height="18" viewBox="0 0 18 18" fill="none"><circle cx="9" cy="9" r="6.5" stroke="#cccccc" stroke-width="3"/></svg>
<div class="a t" style="top:1816.49px;font-size:26px;line-height:26px;color:#cccccc;left:163px;transform:scaleX(0.9704173323699716);transform-origin:left center;">File Saved</div>
<div class="a t" style="top:1816.49px;font-size:26px;line-height:26px;color:#9d9d9d;right:2439px;letter-spacing:0.4px;">36 mins</div>
<svg class="a" style="left:125px;top:1864px;" width="18" height="18" viewBox="0 0 18 18" fill="none"><circle cx="9" cy="9" r="6.5" stroke="#cccccc" stroke-width="3"/></svg>
<div class="a t" style="top:1860.49px;font-size:26px;line-height:26px;color:#cccccc;left:163px;transform:scaleX(0.9704173323699716);transform-origin:left center;">File Saved</div>
<div class="a t" style="top:1860.49px;font-size:26px;line-height:26px;color:#9d9d9d;right:2439px;letter-spacing:0.4px;">38 mins</div>
</div></div>
<div class="a" style="left:668px;top:70px;width:1202px;height:1100px;background:#1f1f1f;"></div>
<div class="a" style="left:668px;top:70px;width:1202px;height:70px;background:#181818;"></div>
<div class="a" style="left:668px;top:138px;width:1202px;height:2px;background:#2b2b2b;"></div>
<div class="a" style="left:668px;top:70px;width:344px;height:70px;background:#1f1f1f;"></div>
<div class="a" style="left:668px;top:70px;width:344px;height:2px;background:#0078d4;"></div>
<div class="a" style="left:1012px;top:70px;width:2px;height:68px;background:#2b2b2b;"></div>
<div class="a" style="left:1252px;top:70px;width:2px;height:68px;background:#2b2b2b;"></div>
<svg class="a" style="left:697px;top:93px;" width="26.0" height="24.0" viewBox="0 0 26 24" fill="none"><path d="M15.8 4.6 A7.6 7.6 0 1 0 15.8 17.4" stroke="#519aba" stroke-width="4.8" fill="none"/><path d="M9.2 10.8 H16.2 M12.7 7.3 V14.3 M16.8 10.8 H23.8 M20.3 7.3 V14.3" stroke="#519aba" stroke-width="1.8"/></svg>
<div class="a t" style="top:93.49px;font-size:26px;line-height:26px;color:#cca700;left:733px;letter-spacing:0.6px;">mipsgen.cpp</div>
<div class="a t" style="top:94.76px;font-size:24.5px;line-height:24.5px;color:#b89a00;left:900.5px;transform:scaleX(0.9453034848834526);transform-origin:left center;-webkit-text-stroke:0.5px #b89a00;">9+, U</div>
<svg class="a" style="left:976px;top:96px;" width="18" height="18" viewBox="0 0 18 18" fill="none"><path d="M1 1L17 17M17 1L1 17" stroke="#ffffff" stroke-width="2.4"/></svg>
<div class="a" style="left:1044px;top:91px;font-size:28px;line-height:28px;font-weight:bold;color:#a074c4;transform:scaleX(0.92);transform-origin:left center;">C</div>
<div class="a t" style="top:93.49px;font-size:26px;line-height:26px;color:#cca700;left:1079px;letter-spacing:0.6px;">reg.h</div>
<div class="a t" style="top:94.76px;font-size:24.5px;line-height:24.5px;color:#b89a00;left:1153.7px;transform:scaleX(0.9525780151031188);transform-origin:left center;-webkit-text-stroke:0.5px #b89a00;">1, U</div>
<svg class="a" style="left:1283px;top:93px;" width="26.0" height="24.0" viewBox="0 0 26 24" fill="none"><path d="M15.8 4.6 A7.6 7.6 0 1 0 15.8 17.4" stroke="#519aba" stroke-width="4.8" fill="none"/><path d="M9.2 10.8 H16.2 M12.7 7.3 V14.3 M16.8 10.8 H23.8 M20.3 7.3 V14.3" stroke="#519aba" stroke-width="1.8"/></svg>
<div class="a t" style="top:93.49px;font-size:26px;line-height:26px;color:#cca700;left:1319px;letter-spacing:0.6px;">value.cpp</div>
<div class="a t" style="top:94.76px;font-size:24.5px;line-height:24.5px;color:#b89a00;left:1445px;transform:scaleX(0.9642997694945747);transform-origin:left center;-webkit-text-stroke:0.5px #b89a00;">9+,</div>
<div class="a" style="left:1490px;top:72px;width:372px;height:66px;background:#181818;"></div>
<svg class="a" style="left:1500px;top:92px;" width="24" height="28" viewBox="0 0 24 28" fill="none"><path d="M3 2 L21 14 L3 26 Z" stroke="#cccccc" stroke-width="2.4" fill="none" stroke-linejoin="round"/></svg>
<svg class="a" style="left:1548px;top:88px;" width="30" height="32" viewBox="0 0 30 32" fill="none"><path d="M2 12 V30 H28 V12" stroke="#cccccc" stroke-width="2.4" fill="none"/><path d="M15 1 V14 M9 8 L15 14 L21 8" stroke="#cccccc" stroke-width="2.4" fill="none"/><circle cx="12" cy="18.5" r="2.3" fill="#cccccc"/><circle cx="20" cy="18.5" r="2.3" fill="#cccccc"/><circle cx="8" cy="24.5" r="2.3" fill="#cccccc"/><circle cx="15.5" cy="24.5" r="2.3" fill="#cccccc"/></svg>
<svg class="a" style="left:1600px;top:89px;" width="32" height="32" viewBox="0 0 32 32" fill="none"><circle cx="6" cy="6" r="4.5" stroke="#cccccc" stroke-width="2.4"/><circle cx="26" cy="26" r="4.5" stroke="#cccccc" stroke-width="2.4"/><path d="M6 10.5 V20 a4 4 0 0 0 4 4 H19 M15.5 20.5 L19.5 24 L15.5 27.5" stroke="#cccccc" stroke-width="2.4" fill="none"/><path d="M26 21.5 V12 a4 4 0 0 0 -4 -4 H13 M16.5 4.5 L12.5 8 L16.5 11.5" stroke="#cccccc" stroke-width="2.4" fill="none"/></svg>
<svg class="a" style="left:1652px;top:88px;" width="32" height="34" viewBox="0 0 32 34" fill="none"><defs><linearGradient id="gb" x1="0" y1="0" x2="1" y2="1"><stop offset="0" stop-color="#12d0f5"/><stop offset="1" stop-color="#3b8cf5"/></linearGradient></defs><path d="M18 27 L28 21 C31 19 31 15 28 13 L10 2.5 C6.5 0.5 3 2.5 3 6.5 V27.5 C3 31.5 6.5 33.5 10 31.5" stroke="url(#gb)" stroke-width="3" fill="none" stroke-linecap="round"/></svg>
<svg class="a" style="left:1702px;top:89px;" width="36" height="32" viewBox="0 0 36 32" fill="none"><defs><linearGradient id="gc" x1="0" y1="1" x2="1" y2="0"><stop offset="0" stop-color="#7fdcf8"/><stop offset="1" stop-color="#6f8ff8"/></linearGradient></defs><g stroke="url(#gc)" stroke-width="8" fill="none" stroke-linecap="round" stroke-linejoin="round"><path d="M5.5 15 L18 4.5 L30.5 15"/><path d="M5.5 25.5 L18 15 L30.5 25.5"/></g><g stroke="#181818" stroke-width="3.2" fill="none" stroke-linecap="round" stroke-linejoin="round"><path d="M5.5 15 L18 4.5 L30.5 15"/><path d="M5.5 25.5 L18 15 L30.5 25.5"/></g><path d="M22 7 L26 10.5" stroke="#181818" stroke-width="4"/></svg>
<svg class="a" style="left:1759px;top:89px;" width="28" height="29" viewBox="0 0 28 29" fill="none"><rect x="1.5" y="1.5" width="25" height="26" rx="3" stroke="#cccccc" stroke-width="2.4"/><path d="M14 2 V27" stroke="#cccccc" stroke-width="2.4"/></svg>
<div class="a" style="left:1811.0px;top:102px;width:4.8px;height:4.8px;border-radius:50%;background:#cccccc;"></div>
<div class="a" style="left:1820.5px;top:102px;width:4.8px;height:4.8px;border-radius:50%;background:#cccccc;"></div>
<div class="a" style="left:1830.0px;top:102px;width:4.8px;height:4.8px;border-radius:50%;background:#cccccc;"></div>
<svg class="a" style="left:708px;top:150px;" width="26.0" height="24.0" viewBox="0 0 26 24" fill="none"><path d="M15.8 4.6 A7.6 7.6 0 1 0 15.8 17.4" stroke="#519aba" stroke-width="4.8" fill="none"/><path d="M9.2 10.8 H16.2 M12.7 7.3 V14.3 M16.8 10.8 H23.8 M20.3 7.3 V14.3" stroke="#519aba" stroke-width="1.8"/></svg>
<div class="a t" style="top:151.49px;font-size:26px;line-height:26px;color:#a9a9a9;left:745px;letter-spacing:0.6px;">mipsgen.cpp</div>
<svg class="a" style="left:913px;top:151px;" width="11" height="20" viewBox="0 0 11 20" fill="none"><path d="M1 1 L9 10.0 L1 19" stroke="#a9a9a9" stroke-width="2" fill="none"/></svg>
<svg class="a" style="left:936px;top:149px;" width="28" height="28" viewBox="0 0 28 28" fill="none"><path d="M13 2 L24 7.5 V20.5 L13 26 L2 20.5 V7.5 Z M2 7.5 L13 13 L24 7.5 M13 13 V26" stroke="#b180d7" stroke-width="2.2" fill="none" stroke-linejoin="round"/></svg>
<div class="a t" style="top:151.49px;font-size:26px;line-height:26px;color:#a9a9a9;left:973px;letter-spacing:0.55px;">MipsGen::translate</div>
<div class="a" style="left:668px;top:184px;width:1174px;height:986px;overflow:hidden;"><div class="a" style="left:-668px;top:-184px;width:3072px;height:1920px;">
<div class="a" style="left:1069.15px;top:560px;width:68.92px;height:38px;background:#653a17;"></div>
<div class="a" style="left:1293.14px;top:788px;width:275.68000000000006px;height:38px;background:#264f78;border-radius:6px 6px 0px 0px;"></div>
<div class="a" style="left:810.7px;top:826px;width:791.3px;height:38px;background:#264f78;border-radius:6px 6px 6px 0px;"></div>
<div class="a" style="left:810.7px;top:864px;width:687.3px;height:38px;background:#264f78;border-radius:0px 0px 6px 0px;"></div>
<div class="a" style="left:810.7px;top:902px;width:258.29999999999995px;height:38px;background:#264f78;border-radius:0px 0px 0px 0px;"></div>
<div class="a" style="left:810.7px;top:940px;width:823.8px;height:38px;background:#264f78;border-radius:0px 6px 6px 0px;"></div>
<div class="a" style="left:810.7px;top:978px;width:472.29999999999995px;height:38px;background:#264f78;border-radius:0px 0px 6px 6px;"></div>
<div class="a" style="left:810.2px;top:256px;width:2px;height:950px;background:#404040;"></div>
<div class="a" style="left:844.6600000000001px;top:256px;width:2px;height:266px;background:#404040;"></div>
<div class="a" style="left:844.6600000000001px;top:598px;width:2px;height:456px;background:#404040;"></div>
<div class="a" style="left:879.12px;top:636px;width:2px;height:380px;background:#404040;"></div>
<div class="a" style="left:913.58px;top:826px;width:2px;height:76px;background:#6a6a6a;"></div>
<div class="a" style="left:913.58px;top:940px;width:2px;height:38px;background:#6a6a6a;"></div>
<div class="a" style="left:844.6600000000001px;top:1130px;width:2px;height:76px;background:#404040;"></div>
<div class="a cl" style="left:678px;width:80px;text-align:right;top:332px;color:#6e7681;">299</div>
<div class="a cl" style="left:810.7px;top:332px;">    <span class="kw">case</span> <span class="ty">CmpID</span><span class="op">::</span><span class="en">SLe</span><span class="op">:</span> <span class="fn">addInst</span><span class="op">&lt;</span><span class="ty">InstType</span><span class="op">::</span><span class="en">SLE</span><span class="op">&gt;</span><span class="b2">(</span><span class="h hp">rs:</span><span class="va">left</span><span class="op">,</span></div>
<div class="a cl" style="left:810.7px;top:370px;">    <span class="h hp">rt:</span><span class="va">right</span><span class="op">,</span> <span class="h hp">rd:</span><span class="va">ret</span><span class="b2">)</span><span class="op">;</span> <span class="kw">break</span><span class="op">;</span></div>
<div class="a cl" style="left:678px;width:80px;text-align:right;top:408px;color:#6e7681;">300</div>
<div class="a cl" style="left:810.7px;top:408px;">    <span class="kw">case</span> <span class="ty">CmpID</span><span class="op">::</span><span class="en">SLt</span><span class="op">:</span> <span class="fn">addInst</span><span class="op">&lt;</span><span class="ty">InstType</span><span class="op">::</span><span class="en">SLT</span><span class="op">&gt;</span><span class="b2">(</span><span class="h hp">rs:</span><span class="va">left</span><span class="op">,</span></div>
<div class="a cl" style="left:810.7px;top:446px;">    <span class="h hp">rt:</span><span class="va">right</span><span class="op">,</span> <span class="h hp">rd:</span><span class="va">ret</span><span class="b2">)</span><span class="op">;</span> <span class="kw">break</span><span class="op">;</span></div>
<div class="a cl" style="left:678px;width:80px;text-align:right;top:484px;color:#6e7681;">301</div>
<div class="a cl" style="left:810.7px;top:484px;">    <span class="b1">}</span><span class="h hb">// switch getCmpType</span></div>
<div class="a cl" style="left:678px;width:80px;text-align:right;top:522px;color:#6e7681;">302</div>
<div class="a cl" style="left:810.7px;top:522px;">  <span class="b3">}</span> <span class="kw">break</span><span class="op">;</span></div>
<div class="a cl" style="left:678px;width:80px;text-align:right;top:560px;color:#6e7681;">303</div>
<div class="a cl" style="left:810.7px;top:560px;">  <span class="kw">case</span> <span class="ty">InstID</span><span class="op">::</span><span class="en">GetElementPtr</span><span class="op">:</span> <span class="b3">{</span></div>
<div class="a cl" style="left:678px;width:80px;text-align:right;top:598px;color:#6e7681;">304</div>
<div class="a cl" style="left:810.7px;top:598px;">    <span class="kw">if</span> <span class="b1">(</span><span class="va">inst</span><span class="lig"><svg width="34.46" height="38"><path d="M3.5 18 H30.5 M24 11.5 L30.5 18 L24 24.5" stroke="#d4d4d4" stroke-width="2.4" fill="none"/></svg></span><span class="va">operands</span><span class="op">.</span><span class="fn">size</span><span class="b2">()</span> <span class="lig"><svg width="34.46" height="38"><path d="M4 16.5 H30.5 M4 24 H30.5" stroke="#d4d4d4" stroke-width="2.6" fill="none"/></svg></span> <span class="nu">3</span><span class="b1">)</span> <span class="b1">{</span></div>
<div class="a cl" style="left:678px;width:80px;text-align:right;top:636px;color:#6e7681;">305</div>
<div class="a cl" style="left:810.7px;top:636px;">      <span class="ty">auto</span> <span class="va">ptr</span><span class="h">: std::shared_ptr&lt;RegBase&gt;</span> <span class="op">=</span> <span class="fn">getReg</span></div>
<div class="a cl" style="left:810.7px;top:674px;">      <span class="b2">(</span><span class="h hp">value:</span><span class="va">inst</span><span class="lig"><svg width="34.46" height="38"><path d="M3.5 18 H30.5 M24 11.5 L30.5 18 L24 24.5" stroke="#d4d4d4" stroke-width="2.4" fill="none"/></svg></span><span class="va">operands</span><span class="b3">[</span><span class="nu">0</span><span class="b3">]</span><span class="op">.</span><span class="va">val</span><span class="b2">)</span><span class="op">;</span></div>
<div class="a cl" style="left:678px;width:80px;text-align:right;top:712px;color:#6e7681;">306</div>
<div class="a cl" style="left:810.7px;top:712px;">      <span class="ty">auto</span> <span class="va">reg</span><span class="h">: std::shared_ptr&lt;RegBase&gt;</span> <span class="op">=</span> <span class="fn">allocReg</span></div>
<div class="a cl" style="left:810.7px;top:750px;">      <span class="b2">(</span><span class="h hp">value:</span><span class="va">inst</span><span class="b2">)</span><span class="op">;</span></div>
<div class="a cl" style="left:678px;width:80px;text-align:right;top:788px;color:#cccccc;">307</div>
<div class="a cl" style="left:810.7px;top:788px;">      <span class="kw">if</span> <span class="b2">(</span><span class="va">ptr</span><span class="lig"><svg width="34.46" height="38"><path d="M3.5 18 H30.5 M24 11.5 L30.5 18 L24 24.5" stroke="#d4d4d4" stroke-width="2.4" fill="none"/></svg></span><span class="fn">getType</span><span class="b3">()</span> <span class="lig"><svg width="34.46" height="38"><path d="M4 16.5 H30.5 M4 24 H30.5" stroke="#d4d4d4" stroke-width="2.6" fill="none"/></svg></span> <span class="ty">RegType</span><span class="op">::</span><span class="en">Off</span><span class="b2">)</span><span class="ws">·</span><span class="b2">{</span></div>
<div class="a cl" style="left:678px;width:80px;text-align:right;top:826px;color:#6e7681;">308</div>
<div class="a cl" style="left:810.7px;top:826px;"><span class="ws">········</span><span class="fn">addInst</span><span class="op">&lt;</span><span class="ty">InstType</span><span class="op">::</span><span class="en">LW</span><span class="op">&gt;</span><span class="b3">(</span><span class="h hp">rs:</span><span class="va">sp</span><span class="op">,</span><span class="ws">·</span><span class="h hp">rt:</span><span class="va">reg</span><span class="op">,</span><span class="ws">·</span></div>
<div class="a cl" style="left:810.7px;top:864px;">        <span class="h hp">rd:</span><span class="bl">nullptr</span><span class="op">,</span><span class="ws">·</span><span class="h hp">inter:</span><span class="va">ptr</span><span class="lig"><svg width="34.46" height="38"><path d="M3.5 18 H30.5 M24 11.5 L30.5 18 L24 24.5" stroke="#d4d4d4" stroke-width="2.4" fill="none"/></svg></span><span class="va">index</span><span class="b3">)</span><span class="op">;</span></div>
<div class="a cl" style="left:678px;width:80px;text-align:right;top:902px;color:#6e7681;">309</div>
<div class="a cl" style="left:810.7px;top:902px;"><span class="ws">······</span><span class="b2">}</span><span class="ws">·</span><span class="kw">else</span><span class="ws">·</span><span class="b2">{</span></div>
<div class="a cl" style="left:678px;width:80px;text-align:right;top:940px;color:#6e7681;">310</div>
<div class="a cl" style="left:810.7px;top:940px;"><span class="ws">········</span><span class="fn">addInst</span><span class="op">&lt;</span><span class="ty">InstType</span><span class="op">::</span><span class="en">LW</span><span class="op">&gt;</span><span class="b3">(</span><span class="h hp">rs:</span><span class="va">ptr</span><span class="op">,</span><span class="ws">·</span><span class="h hp">rt:</span><span class="va">reg</span><span class="b3">)</span><span class="op">;</span></div>
<div class="a cl" style="left:678px;width:80px;text-align:right;top:978px;color:#6e7681;">311</div>
<div class="a cl" style="left:810.7px;top:978px;"><span class="ws">······</span><span class="b2">}</span><span class="h hb">// if getType <span class="hlig"><svg width="34.46" height="38"><path d="M4 18 H30.5 M4 25.5 H30.5" stroke="#969696" stroke-width="2.6" fill="none"/></svg></span> Off</span></div>
<div class="a cl" style="left:678px;width:80px;text-align:right;top:1016px;color:#6e7681;">312</div>
<div class="a cl" style="left:810.7px;top:1016px;">    <span class="b1">}</span><span class="h hb">// if size <span class="hlig"><svg width="34.46" height="38"><path d="M4 18 H30.5 M4 25.5 H30.5" stroke="#969696" stroke-width="2.6" fill="none"/></svg></span> 3</span></div>
<div class="a cl" style="left:678px;width:80px;text-align:right;top:1054px;color:#6e7681;">313</div>
<div class="a cl" style="left:810.7px;top:1054px;">  <span class="b3">}</span> <span class="kw">break</span><span class="op">;</span></div>
<div class="a cl" style="left:678px;width:80px;text-align:right;top:1092px;color:#6e7681;">314</div>
<div class="a cl" style="left:810.7px;top:1092px;">  <span class="kw">case</span> <span class="ty">InstID</span><span class="op">::</span><span class="en">Ret</span><span class="op">:</span> <span class="b3">{</span></div>
<div class="a cl" style="left:678px;width:80px;text-align:right;top:1130px;color:#6e7681;">315</div>
<div class="a cl" style="left:810.7px;top:1130px;">    <span class="kw">if</span> <span class="b1">(</span><span class="op">!</span><span class="va">inst</span><span class="lig"><svg width="34.46" height="38"><path d="M3.5 18 H30.5 M24 11.5 L30.5 18 L24 24.5" stroke="#d4d4d4" stroke-width="2.4" fill="none"/></svg></span><span class="va">operands</span><span class="op">.</span><span class="fn">empty</span><span class="b2">()</span><span class="b1">)</span> <span class="b1">{</span></div>
<div class="a cl" style="left:678px;width:80px;text-align:right;top:1168px;color:#6e7681;">316</div>
<div class="a cl" style="left:810.7px;top:1168px;">    <span class="kw">return</span></div>
<div class="a" style="left:1291.14px;top:790px;width:3px;height:34px;background:#aeafad;"></div>
<div class="a" style="left:810px;top:1146px;width:401px;height:24px;background:rgba(121,121,121,0.4);"></div>
</div></div>
<div class="a" style="left:668px;top:184px;width:1174px;height:6px;background:linear-gradient(rgba(0,0,0,0.6),rgba(0,0,0,0));"></div>
<div class="a" style="left:668px;top:184px;width:1174px;height:152px;background:#1f1f1f;"></div>
<div class="a" style="left:668px;top:336px;width:1172px;height:8px;background:linear-gradient(rgba(0,0,0,0.85),rgba(0,0,0,0));"></div>
<div class="a cl" style="left:678px;width:80px;text-align:right;top:184px;color:#6e7681;">217</div>
<div class="a cl" style="left:810.7px;top:184px;"><span class="bl">void</span> <span class="ty">MipsGen</span><span class="op">::</span><span class="fn">translate</span><span class="b1">(</span><span class="ty">std</span><span class="op">::</span><span class="ty">shared_ptr</span><span class="op">&lt;</span><span class="ty">Inst</span><span class="op">&gt;</span> <span class="va">inst</span><span class="b1">)</span> <span class="b1">{</span></div>
<div class="a cl" style="left:678px;width:80px;text-align:right;top:222px;color:#6e7681;">218</div>
<div class="a cl" style="left:810.7px;top:222px;">  <span class="kw">switch</span> <span class="b2">(</span><span class="va">inst</span><span class="lig"><svg width="34.46" height="38"><path d="M3.5 18 H30.5 M24 11.5 L30.5 18 L24 24.5" stroke="#d4d4d4" stroke-width="2.4" fill="none"/></svg></span><span class="fn">getInstType</span><span class="b3">()</span><span class="b2">)</span> <span class="b2">{</span></div>
<div class="a cl" style="left:678px;width:80px;text-align:right;top:260px;color:#6e7681;">287</div>
<div class="a cl" style="left:810.7px;top:260px;">  <span class="kw">case</span> <span class="ty">InstID</span><span class="op">::</span><span class="en">Cmp</span><span class="op">:</span> <span class="b3">{</span></div>
<div class="a cl" style="left:678px;width:80px;text-align:right;top:298px;color:#6e7681;">294</div>
<div class="a cl" style="left:810.7px;top:298px;">    <span class="kw">switch</span> <span class="b1">(</span><span class="va">ci</span><span class="lig"><svg width="34.46" height="38"><path d="M3.5 18 H30.5 M24 11.5 L30.5 18 L24 24.5" stroke="#d4d4d4" stroke-width="2.4" fill="none"/></svg></span><span class="fn">getCmpType</span><span class="b2">()</span><span class="b1">)</span> <span class="b1">{</span></div>
<div class="a" style="left:1842px;top:184px;width:28px;height:986px;background:#1f1f1f;"></div>
<div class="a" style="left:1842px;top:184px;width:1px;height:986px;background:#161616;"></div>
<div class="a" style="left:1861px;top:191px;width:9px;height:12px;background:#cca700;"></div>
<div class="a" style="left:1861px;top:283px;width:9px;height:12px;background:#cca700;"></div>
<div class="a" style="left:1861px;top:338px;width:9px;height:12px;background:#cca700;"></div>
<div class="a" style="left:1861px;top:362px;width:9px;height:21px;background:#cca700;"></div>
<div class="a" style="left:1861px;top:420px;width:9px;height:12px;background:#cca700;"></div>
<div class="a" style="left:1861px;top:455px;width:9px;height:25px;background:#cca700;"></div>
<div class="a" style="left:1861px;top:496px;width:9px;height:12px;background:#cca700;"></div>
<div class="a" style="left:1861px;top:513px;width:9px;height:18px;background:#cca700;"></div>
<div class="a" style="left:1861px;top:541px;width:9px;height:12px;background:#cca700;"></div>
<div class="a" style="left:1861px;top:564px;width:9px;height:12px;background:#cca700;"></div>
<div class="a" style="left:1861px;top:597.5px;width:9px;height:30.5px;background:#cca700;"></div>
<div class="a" style="left:1861px;top:712px;width:9px;height:34.60000000000002px;background:#cca700;"></div>
<div class="a" style="left:1861px;top:748.7px;width:9px;height:12.0px;background:#cca700;"></div>
<div class="a" style="left:1861px;top:861.7px;width:9px;height:12.0px;background:#cca700;"></div>
<div class="a" style="left:1861px;top:924.6px;width:9px;height:24.100000000000023px;background:#cca700;"></div>
<div class="a" style="left:1861px;top:969.6px;width:9px;height:20.399999999999977px;background:#cca700;"></div>
<div class="a" style="left:1861px;top:1008px;width:9px;height:12.799999999999955px;background:#cca700;"></div>
<div class="a" style="left:1861px;top:1084.4px;width:9px;height:12.0px;background:#cca700;"></div>
<div class="a" style="left:1842px;top:821.5px;width:28px;height:42.3px;background:rgba(121,121,121,0.4);"></div>
<div class="a" style="left:1852px;top:833px;width:9px;height:11.5px;background:#7c6140;"></div>
<div class="a" style="left:1843px;top:846px;width:27px;height:3.7px;background:#8a8a8a;"></div>
<div class="a" style="left:1842px;top:184px;width:28px;height:7px;background:linear-gradient(rgba(0,0,0,0.7),rgba(0,0,0,0));"></div>
<div class="a" style="left:977px;top:184px;width:836px;height:65px;background:#202020;border:1px solid #313131;border-top:none;border-radius:0 0 8px 8px;box-shadow:0 5px 8px 0 rgba(0,0,0,0.36);"></div>
<div class="a" style="left:977px;top:184px;width:5px;height:66px;background:#454545;border-radius:0 0 0 8px;"></div>
<svg class="a" style="left:998px;top:206px;" width="12" height="21" viewBox="0 0 12 21" fill="none"><path d="M1 1 L10 10.5 L1 20" stroke="#cccccc" stroke-width="2.2" fill="none"/></svg>
<div class="a" style="left:1020px;top:190px;width:440px;height:48px;background:#313131;border:1px solid #3c3c3c;border-radius:4px;"></div>
<div class="a t" style="top:203.99px;font-size:26px;line-height:26px;color:#cccccc;left:1035px;letter-spacing:0.5px;">gete</div>
<div class="a t" style="top:206.22px;font-size:21px;line-height:21px;color:#cccccc;left:1338px;transform:scaleX(0.9538409129620167);transform-origin:left center;">Aa</div>
<div class="a t" style="top:202.53px;font-size:23px;line-height:23px;color:#cccccc;left:1379px;">ab</div>
<div class="a" style="left:1378px;top:223px;width:2px;height:6px;background:#cccccc;"></div>
<div class="a" style="left:1378px;top:227px;width:33px;height:2px;background:#cccccc;"></div>
<div class="a" style="left:1409px;top:223px;width:2px;height:6px;background:#cccccc;"></div>
<div class="a" style="left:1426px;top:219px;width:8px;height:8px;background:#cccccc;"></div>
<div class="a t" style="top:202.53px;font-size:36px;line-height:36px;color:#cccccc;left:1434px;">*</div>
<div class="a t" style="top:203.99px;font-size:26px;line-height:26px;color:#cccccc;left:1474px;transform:scaleX(0.9132183162537295);transform-origin:left center;">1 of 1</div>
<svg class="a" style="left:1623px;top:202px;" width="24" height="26" viewBox="0 0 24 26" fill="none"><path d="M12 25 V2 M2 12 L12 2 L22 12" stroke="#cccccc" stroke-width="2.3" fill="none"/></svg>
<svg class="a" style="left:1673px;top:202px;" width="24" height="26" viewBox="0 0 24 26" fill="none"><path d="M12 1 V24 M2 14 L12 24 L22 14" stroke="#cccccc" stroke-width="2.3" fill="none"/></svg>
<svg class="a" style="left:1719px;top:203px;" width="30" height="24" viewBox="0 0 30 24" fill="none"><path d="M1 3 H23 M1 12 H29 M1 21 H22" stroke="#cccccc" stroke-width="2.3"/></svg>
<svg class="a" style="left:1772px;top:205px;" width="19" height="19" viewBox="0 0 19 19" fill="none"><path d="M1 1L18 18M18 1L1 18" stroke="#cccccc" stroke-width="2.3"/></svg>
<div class="a" style="left:1870px;top:70px;width:2px;height:1100px;background:#2b2b2b;"></div>
<div class="a" style="left:1872px;top:70px;width:1200px;height:1100px;background:#1f1f1f;"></div>
<div class="a" style="left:1872px;top:70px;width:1200px;height:70px;background:#181818;"></div>
<div class="a" style="left:1872px;top:138px;width:1200px;height:2px;background:#2b2b2b;"></div>
<div class="a" style="left:2353px;top:70px;width:240px;height:70px;background:#1f1f1f;"></div>
<div class="a" style="left:2113px;top:70px;width:2px;height:68px;background:#2b2b2b;"></div>
<div class="a" style="left:2353px;top:70px;width:2px;height:68px;background:#2b2b2b;"></div>
<div class="a" style="left:2593px;top:70px;width:2px;height:68px;background:#2b2b2b;"></div>
<svg class="a" style="left:1905px;top:96px;" width="18" height="18" viewBox="0 0 18 18" fill="none"><path d="M0 2H17 M0 7H12 M0 11H17 M0 16H11" stroke="#9d9d9d" stroke-width="2.6"/></svg>
<div class="a t" style="top:93.49px;font-size:26px;line-height:26px;color:#9d9d9d;left:1934px;letter-spacing:0.6px;">testfile.txt</div>
<svg class="a" style="left:2150px;top:96px;" width="18" height="18" viewBox="0 0 18 18" fill="none"><path d="M0 2H17 M0 7H12 M0 11H17 M0 16H11" stroke="#9d9d9d" stroke-width="2.6"/></svg>
<div class="a t" style="top:93.49px;font-size:26px;line-height:26px;color:#9d9d9d;left:2179px;letter-spacing:0.6px;">mips.txt</div>
<svg class="a" style="left:2390px;top:96px;" width="18" height="18" viewBox="0 0 18 18" fill="none"><path d="M0 2H17 M0 7H12 M0 11H17 M0 16H11" stroke="#bdbdbd" stroke-width="2.6"/></svg>
<div class="a t" style="top:93.49px;font-size:26px;line-height:26px;color:#bdbdbd;left:2418px;letter-spacing:0.3px;">llvm_ir.txt</div>
<svg class="a" style="left:2556px;top:96px;" width="18" height="18" viewBox="0 0 18 18" fill="none"><path d="M1 1L17 17M17 1L1 17" stroke="#9d9d9d" stroke-width="2.2"/></svg>
<div class="a" style="left:3014.0px;top:102px;width:4.8px;height:4.8px;border-radius:50%;background:#cccccc;"></div>
<div class="a" style="left:3023.5px;top:102px;width:4.8px;height:4.8px;border-radius:50%;background:#cccccc;"></div>
<div class="a" style="left:3033.0px;top:102px;width:4.8px;height:4.8px;border-radius:50%;background:#cccccc;"></div>
<div class="a t" style="top:151.49px;font-size:26px;line-height:26px;color:#a9a9a9;left:1903px;letter-spacing:0.5px;">build</div>
<svg class="a" style="left:1975px;top:151px;" width="11" height="20" viewBox="0 0 11 20" fill="none"><path d="M1 1 L9 10.0 L1 19" stroke="#a9a9a9" stroke-width="2" fill="none"/></svg>
<svg class="a" style="left:2010px;top:154px;" width="18" height="18" viewBox="0 0 18 18" fill="none"><path d="M0 2H17 M0 7H12 M0 11H17 M0 16H11" stroke="#a9a9a9" stroke-width="2.6"/></svg>
<div class="a t" style="top:151.49px;font-size:26px;line-height:26px;color:#a9a9a9;left:2039px;letter-spacing:0.3px;">llvm_ir.txt</div>
<div class="a" style="left:2012.0px;top:676px;width:2px;height:380px;background:#404040;"></div>
<div class="a" style="left:2012.5px;top:1095px;width:1055.5px;height:38px;box-sizing:border-box;border:2px solid #282828;"></div>
<div class="a cl" style="left:1880px;width:80px;text-align:right;top:182px;color:#6e7681;">1</div>
<div class="a cl" style="left:2012.5px;top:182px;color:#cccccc;">; ModuleID = 'testfile.txt'</div>
<div class="a cl" style="left:1880px;width:80px;text-align:right;top:220px;color:#6e7681;">2</div>
<div class="a cl" style="left:2012.5px;top:220px;color:#cccccc;">source_filename = "testfile.txt"</div>
<div class="a cl" style="left:1880px;width:80px;text-align:right;top:258px;color:#6e7681;">3</div>
<div class="a cl" style="left:1880px;width:80px;text-align:right;top:296px;color:#6e7681;">4</div>
<div class="a cl" style="left:2012.5px;top:296px;color:#cccccc;">@__str.1 = dso_local constant [9 x i8] c"21373119\00"</div>
<div class="a cl" style="left:1880px;width:80px;text-align:right;top:334px;color:#6e7681;">5</div>
<div class="a cl" style="left:1880px;width:80px;text-align:right;top:372px;color:#6e7681;">6</div>
<div class="a cl" style="left:2012.5px;top:372px;color:#cccccc;">declare i32 @getint()</div>
<div class="a cl" style="left:1880px;width:80px;text-align:right;top:410px;color:#6e7681;">7</div>
<div class="a cl" style="left:2012.5px;top:410px;color:#cccccc;">declare i32 @getchar()</div>
<div class="a cl" style="left:1880px;width:80px;text-align:right;top:448px;color:#6e7681;">8</div>
<div class="a cl" style="left:2012.5px;top:448px;color:#cccccc;">declare void @putint(i32)</div>
<div class="a cl" style="left:1880px;width:80px;text-align:right;top:486px;color:#6e7681;">9</div>
<div class="a cl" style="left:2012.5px;top:486px;color:#cccccc;">declare void @putch(i32)</div>
<div class="a cl" style="left:1880px;width:80px;text-align:right;top:524px;color:#6e7681;">10</div>
<div class="a cl" style="left:2012.5px;top:524px;color:#cccccc;">declare void @putstr(i8<span class="ast">*</span>)</div>
<div class="a cl" style="left:1880px;width:80px;text-align:right;top:562px;color:#6e7681;">11</div>
<div class="a cl" style="left:1880px;width:80px;text-align:right;top:600px;color:#6e7681;">12</div>
<div class="a cl" style="left:2012.5px;top:600px;color:#cccccc;">define dso_local i32 @main() {</div>
<div class="a cl" style="left:1880px;width:80px;text-align:right;top:638px;color:#6e7681;">13</div>
<div class="a cl" style="left:2012.5px;top:638px;color:#cccccc;">entry:</div>
<div class="a cl" style="left:1880px;width:80px;text-align:right;top:676px;color:#6e7681;">14</div>
<div class="a cl" style="left:2012.5px;top:676px;color:#cccccc;">  %0 = getelementptr inbounds [9 x i8], [9 x i8]<span class="ast">*</span> @__str.</div>
<div class="a cl" style="left:2012.5px;top:714px;color:#cccccc;">  1, i32 0, i32 0</div>
<div class="a cl" style="left:1880px;width:80px;text-align:right;top:752px;color:#6e7681;">15</div>
<div class="a cl" style="left:2012.5px;top:752px;color:#cccccc;">  call void @putstr(i8<span class="ast">*</span> %0)</div>
<div class="a cl" style="left:1880px;width:80px;text-align:right;top:790px;color:#6e7681;">16</div>
<div class="a cl" style="left:2012.5px;top:790px;color:#cccccc;">  %1 = alloca i32</div>
<div class="a cl" style="left:1880px;width:80px;text-align:right;top:828px;color:#6e7681;">17</div>
<div class="a cl" style="left:2012.5px;top:828px;color:#cccccc;">  store i32 0, i32<span class="ast">*</span> %1</div>
<div class="a cl" style="left:1880px;width:80px;text-align:right;top:866px;color:#6e7681;">18</div>
<div class="a cl" style="left:2012.5px;top:866px;color:#cccccc;">  %2 = alloca i32</div>
<div class="a cl" style="left:1880px;width:80px;text-align:right;top:904px;color:#6e7681;">19</div>
<div class="a cl" style="left:2012.5px;top:904px;color:#cccccc;">  store i32 1, i32<span class="ast">*</span> %2</div>
<div class="a cl" style="left:1880px;width:80px;text-align:right;top:942px;color:#6e7681;">20</div>
<div class="a cl" style="left:2012.5px;top:942px;color:#cccccc;">  %3 = load i32, i32<span class="ast">*</span> %2</div>
<div class="a cl" style="left:1880px;width:80px;text-align:right;top:980px;color:#6e7681;">21</div>
<div class="a cl" style="left:2012.5px;top:980px;color:#cccccc;">  call void @putint(i32 %3)</div>
<div class="a cl" style="left:1880px;width:80px;text-align:right;top:1018px;color:#6e7681;">22</div>
<div class="a cl" style="left:2012.5px;top:1018px;color:#cccccc;">  ret i32 0</div>
<div class="a cl" style="left:1880px;width:80px;text-align:right;top:1056px;color:#6e7681;">23</div>
<div class="a cl" style="left:2012.5px;top:1056px;color:#cccccc;">}</div>
<div class="a cl" style="left:1880px;width:80px;text-align:right;top:1094px;color:#4b5058;">24</div>
<div class="a" style="left:3043px;top:184px;width:1px;height:986px;background:#2b2b2b;"></div>
<div class="a" style="left:3044px;top:655px;width:28px;height:3px;background:#8a8a8a;"></div>
<div class="a" style="left:668px;top:1170px;width:2404px;height:2px;background:#2b2b2b;"></div>
<div class="a" style="left:668px;top:1172px;width:2404px;height:704px;background:#181818;"></div>
<div class="a t" style="top:1197.38px;font-size:22px;line-height:22px;color:#9d9d9d;left:708.7px;transform:scaleX(0.9332713060992878);transform-origin:left center;">PROBLEMS</div>
<div class="a t" style="top:1197.38px;font-size:22px;line-height:22px;color:#9d9d9d;left:944px;transform:scaleX(0.9708395675175104);transform-origin:left center;">OUTPUT</div>
<div class="a t" style="top:1197.38px;font-size:22px;line-height:22px;color:#9d9d9d;left:1079.6px;transform:scaleX(0.9139408309532793);transform-origin:left center;">PORTS</div>
<div class="a t" style="top:1197.38px;font-size:22px;line-height:22px;color:#9d9d9d;left:1195.6px;transform:scaleX(0.9486627891535867);transform-origin:left center;">GITLENS</div>
<div class="a t" style="top:1197.38px;font-size:22px;line-height:22px;color:#9d9d9d;left:1332px;transform:scaleX(0.9704276865959676);transform-origin:left center;">SERIAL MONITOR</div>
<div class="a t" style="top:1197.38px;font-size:22px;line-height:22px;color:#9d9d9d;left:1561px;transform:scaleX(0.935620334446029);transform-origin:left center;">SQL CONSOLE</div>
<div class="a t" style="top:1197.38px;font-size:22px;line-height:22px;color:#d8d8d8;left:1756px;transform:scaleX(0.9718246153241055);transform-origin:left center;">TERMINAL</div>
<div class="a t" style="top:1197.38px;font-size:22px;line-height:22px;color:#9d9d9d;left:1911.6px;transform:scaleX(0.9472064605941206);transform-origin:left center;">DEBUG CONSOLE</div>
<div class="a" style="left:842px;top:1190px;width:58px;height:34px;border-radius:17px;background:#616161;color:#f8f8f8;font-size:22px;line-height:34px;text-align:center;">180</div>
<div class="a" style="left:1752px;top:1227px;width:115px;height:2px;background:#0078d4;"></div>
<svg class="a" style="left:2829px;top:1192px;" width="28" height="28" viewBox="0 0 28 28" fill="none"><path d="M14 1 V27 M1 14 H27" stroke="#cccccc" stroke-width="2.3"/></svg>
<svg class="a" style="left:2868px;top:1202px;" width="17" height="10" viewBox="0 0 17 10" fill="none"><path d="M1 1 L8.5 8.5 L16 1" stroke="#cccccc" stroke-width="2" fill="none"/></svg>
<div class="a" style="left:2910px;top:1204.5px;width:4.6px;height:4.6px;border-radius:50%;background:#cccccc;"></div>
<div class="a" style="left:2920px;top:1204.5px;width:4.6px;height:4.6px;border-radius:50%;background:#cccccc;"></div>
<div class="a" style="left:2930px;top:1204.5px;width:4.6px;height:4.6px;border-radius:50%;background:#cccccc;"></div>
<svg class="a" style="left:2963px;top:1199px;" width="22" height="13" viewBox="0 0 22 13" fill="none"><path d="M1 12 L11 2 L21 12" stroke="#cccccc" stroke-width="2.2" fill="none"/></svg>
<svg class="a" style="left:3017px;top:1197px;" width="18" height="18" viewBox="0 0 18 18" fill="none"><path d="M1 1L17 17M17 1L1 17" stroke="#cccccc" stroke-width="2.3"/></svg>
<div class="a" style="left:2714px;top:1242px;width:2px;height:634px;background:#2b2b2b;"></div>
<div class="a" style="left:2716px;top:1240px;width:356px;height:44px;background:#37373d;"></div>
<div class="a" style="left:2716px;top:1240px;width:2px;height:44px;background:#0078d4;"></div>
<svg class="a" style="left:2738px;top:1250px;" width="28" height="28" viewBox="0 0 28 28" fill="none"><rect x="1.2" y="1.2" width="25.6" height="25.6" rx="1.5" stroke="#cccccc" stroke-width="2.2"/><path d="M6 9 L11.5 14 L6 19 M13 20.5 H21.5" stroke="#cccccc" stroke-width="2" fill="none"/></svg>
<div class="a t" style="top:1249.49px;font-size:26px;line-height:26px;color:#cccccc;left:2776px;letter-spacing:0.5px;">zsh</div>
<div class="a t" style="top:1251.18px;font-size:24px;line-height:24px;color:#a0a0a0;left:2829px;letter-spacing:0.5px;">build</div>
<svg class="a" style="left:2736px;top:1292px;" width="32" height="32" viewBox="0 0 32 32" fill="none"><ellipse cx="16" cy="18.5" rx="9" ry="10.5" stroke="#cccccc" stroke-width="2"/><path d="M11 8.5 a5 4.5 0 0 1 10 0" stroke="#cccccc" stroke-width="2"/><path d="M12 14 L20 22 M20 14 L12 22 M1 18 H7 M25 18 H31 M4 5 L8 9 M28 5 L24 9 M4 31 L8 27 M28 31 L24 27" stroke="#cccccc" stroke-width="2"/></svg>
<div class="a t" style="top:1293.99px;font-size:26px;line-height:26px;color:#cccccc;left:2776px;letter-spacing:0.5px;">cppdbg: Compiler</div>
<svg class="a" style="left:2738px;top:1338px;" width="28" height="28" viewBox="0 0 28 28" fill="none"><rect x="1.2" y="1.2" width="25.6" height="25.6" rx="1.5" stroke="#cccccc" stroke-width="2.2"/><path d="M6 9 L11.5 14 L6 19 M13 20.5 H21.5" stroke="#cccccc" stroke-width="2" fill="none"/></svg>
<div class="a t" style="top:1337.99px;font-size:26px;line-height:26px;color:#cccccc;left:2776px;letter-spacing:0.5px;">CMake/Launch - Co...</div>
<div class="a tl" style="left:708px;top:1247px;"><span style="color:#d4d4d4;font-weight:bold;">' not handled in switch [-Wswitch]</span></div>
<div class="a tl" style="left:708px;top:1284px;"><span style="color:#cccccc;">  173 |     switch (init-&gt;getConstantType()) {</span></div>
<div class="a tl" style="left:708px;top:1321px;"><span style="color:#cccccc;">      |</span><span style="color:#23d18b;font-weight:bold;">             ~~~~~~^~~~~~~~~~~~~~~~~</span></div>
<div class="a tl" style="left:708px;top:1358px;"><span style="color:#d4d4d4;font-weight:bold;">/home/pp82/Uni/2024fl/ct/lab/Compiler/mipsgen.cpp:360:19: </span><span style="color:#d670d6;font-weight:bold;">warning:</span><span style="color:#d4d4d4;font-weight:bold;"> enumeration value 'Space' not handled in switch [</span></div>
<div class="a tl" style="left:708px;top:1395px;"><span style="color:#d4d4d4;font-weight:bold;">-Wswitch]</span></div>
<div class="a tl" style="left:708px;top:1432px;"><span style="color:#cccccc;">  360 |     switch (data-&gt;getType()) {</span></div>
<div class="a tl" style="left:708px;top:1469px;"><span style="color:#cccccc;">      |</span><span style="color:#23d18b;font-weight:bold;">             ~~~~~~^~~~~~~~~</span></div>
<div class="a tl" style="left:708px;top:1506px;"><span style="color:#cccccc;">2 warnings generated.</span></div>
<div class="a tl" style="left:708px;top:1543px;"><span style="color:#cccccc;">[2/3] Linking CXX executable Compiler</span></div>
<div class="a" style="left:708px;top:1580px;width:935px;height:37px;background:#303030;"></div>
<svg class="a" style="left:1643px;top:1580px" width="17" height="37" viewBox="0 0 17 37" fill="none"><path d="M0 0 L16 18.5 L0 37 Z" fill="#303030"/></svg>
<svg class="a" style="left:725px;top:1580px" width="17" height="37" viewBox="0 0 17 37" fill="none"><path d="M8.5 8 L16 29 C13 26 11 25 8.5 25 C6 25 4 26 1 29 Z" fill="#f0f0f0"/><path d="M8.5 20 C7.5 20 6.5 21 6 24 L11 24 C10.5 21 9.5 20 8.5 20Z" fill="#303030"/></svg>
<svg class="a" style="left:759px;top:1580px" width="17" height="37" viewBox="0 0 17 37" fill="none"><path d="M0 -1 L16 18.5 L0 38" stroke="#8a8a8a" stroke-width="2.2" fill="none"/></svg>
<svg class="a" style="left:793px;top:1580px" width="18" height="37" viewBox="0 0 18 37" fill="none"><path d="M1 12 H7 L9 14 H15 V18 H4 L1 27 Z" fill="#4aa0c8"/><path d="M4 18 H17 L14 28 H1 Z" fill="#4aa0c8"/></svg>
<div class="a tl" style="left:827px;top:1580px;"><span style="color:#00afff;">~</span><span style="color:#4ab0c8;">/</span><span style="color:#a8a4d0;">U</span><span style="color:#4ab0c8;">/</span><span style="color:#a8a4d0;">2024f</span><span style="color:#4ab0c8;">/</span><span style="color:#4ab0c8;">ct</span><span style="color:#4ab0c8;">/</span><span style="color:#a8a4d0;">la</span><span style="color:#4ab0c8;">/</span><span style="color:#00afff;font-weight:bold;">Compiler</span><span style="color:#4ab0c8;">/</span><span style="color:#00afff;font-weight:bold;">build</span></div>
<svg class="a" style="left:1354px;top:1580px" width="17" height="37" viewBox="0 0 17 37" fill="none"><path d="M0 -1 L16 18.5 L0 38" stroke="#8a8a8a" stroke-width="2.2" fill="none"/></svg>
<div class="a" style="left:1388px;top:1589px;font-family:'Liberation Serif',serif;font-weight:bold;font-size:17px;line-height:20px;color:#5faf00;">git</div>
<svg class="a" style="left:1422px;top:1580px" width="17" height="37" viewBox="0 0 17 37" fill="none"><circle cx="4" cy="10" r="2.6" stroke="#5faf00" stroke-width="2.2"/><circle cx="13" cy="10" r="2.6" stroke="#5faf00" stroke-width="2.2"/><circle cx="4" cy="27" r="2.6" stroke="#5faf00" stroke-width="2.2"/><path d="M4 12.5 V24.5 M13 12.5 C13 19 5 18 4.5 23" stroke="#5faf00" stroke-width="2.2" fill="none"/></svg>
<div class="a tl" style="left:1456px;top:1580px;"><span style="color:#5faf00;">mips</span> <span style="color:#d7af00;">!4</span> <span style="color:#00afff;">?4</span></div>
<div class="a tl" style="left:1677px;top:1580px;color:#2ec48e;">./Compiler</div>
<div class="a" style="left:1949px;top:1580px;width:714px;height:37px;background:#303030;"></div>
<svg class="a" style="left:1932px;top:1580px" width="17" height="37" viewBox="0 0 17 37" fill="none"><path d="M17 0 L1 18.5 L17 37 Z" fill="#303030"/></svg>
<svg class="a" style="left:1966px;top:1580px" width="24" height="37" viewBox="0 0 24 37" fill="none"><path d="M5.5 17 L11 23 L21.5 10.5" stroke="#5faf00" stroke-width="3.8" fill="none"/></svg>
<svg class="a" style="left:2000px;top:1580px" width="17" height="37" viewBox="0 0 17 37" fill="none"><path d="M17 -1 L1 18.5 L17 38" stroke="#8a8a8a" stroke-width="2.2" fill="none"/></svg>
<div class="a tl" style="left:2034px;top:1580px;color:#b0b0b0;">9s</div>
<svg class="a" style="left:2085px;top:1580px" width="18" height="37" viewBox="0 0 18 37" fill="none"><rect x="1.5" y="9" width="15" height="2.6" fill="#b0b0b0"/><rect x="1.5" y="28" width="15" height="3" fill="#b0b0b0"/><path d="M3.8 11 C3.8 16 8.5 18 9 19.5 C9.5 18 14.2 16 14.2 11" stroke="#b0b0b0" stroke-width="2" fill="none"/><path d="M9 19.5 C8 21 3.5 23 3.5 28 H14.5 C14.5 23 10 21 9 19.5 Z" fill="#b0b0b0"/></svg>
<svg class="a" style="left:2119px;top:1580px" width="17" height="37" viewBox="0 0 17 37" fill="none"><path d="M17 -1 L1 18.5 L17 38" stroke="#8a8a8a" stroke-width="2.2" fill="none"/></svg>
<div class="a tl" style="left:2153px;top:1580px;color:#87afaf;">7.33G</div>
<svg class="a" style="left:2255px;top:1580px" width="17" height="37" viewBox="0 0 17 37" fill="none"><circle cx="8.5" cy="19.5" r="7.5" fill="#87afaf"/><path d="M7.5 23 L11 15" stroke="#303030" stroke-width="2.2"/></svg>
<svg class="a" style="left:2289px;top:1580px" width="17" height="37" viewBox="0 0 17 37" fill="none"><path d="M17 -1 L1 18.5 L17 38" stroke="#8a8a8a" stroke-width="2.2" fill="none"/></svg>
<div class="a tl" style="left:2323px;top:1580px;color:#87afaf;">13:18:48</div>
<svg class="a" style="left:2476px;top:1580px" width="17" height="37" viewBox="0 0 17 37" fill="none"><circle cx="8.5" cy="19.5" r="6.5" stroke="#87afaf" stroke-width="2"/><path d="M8.5 15 V20 L12 22" stroke="#87afaf" stroke-width="1.8" fill="none"/></svg>
<svg class="a" style="left:2510px;top:1580px" width="17" height="37" viewBox="0 0 17 37" fill="none"><path d="M17 -1 L1 18.5 L17 38" stroke="#8a8a8a" stroke-width="2.2" fill="none"/></svg>
<div class="a tl" style="left:2544px;top:1580px;color:#5faf00;">100%</div>
<svg class="a" style="left:2629px;top:1580px" width="17" height="37" viewBox="0 0 17 37" fill="none"><rect x="4.5" y="6.5" width="7" height="3" rx="1" fill="#5faf00"/><rect x="1" y="8.5" width="14.5" height="22.5" rx="2.5" fill="#5faf00"/></svg>
<div class="a" style="left:708px;top:1617px;width:935px;height:37px;background:#303030;"></div>
<svg class="a" style="left:1643px;top:1617px" width="17" height="37" viewBox="0 0 17 37" fill="none"><path d="M0 0 L16 18.5 L0 37 Z" fill="#303030"/></svg>
<svg class="a" style="left:725px;top:1617px" width="17" height="37" viewBox="0 0 17 37" fill="none"><path d="M8.5 8 L16 29 C13 26 11 25 8.5 25 C6 25 4 26 1 29 Z" fill="#f0f0f0"/><path d="M8.5 20 C7.5 20 6.5 21 6 24 L11 24 C10.5 21 9.5 20 8.5 20Z" fill="#303030"/></svg>
<svg class="a" style="left:759px;top:1617px" width="17" height="37" viewBox="0 0 17 37" fill="none"><path d="M0 -1 L16 18.5 L0 38" stroke="#8a8a8a" stroke-width="2.2" fill="none"/></svg>
<svg class="a" style="left:793px;top:1617px" width="18" height="37" viewBox="0 0 18 37" fill="none"><path d="M1 12 H7 L9 14 H15 V18 H4 L1 27 Z" fill="#4aa0c8"/><path d="M4 18 H17 L14 28 H1 Z" fill="#4aa0c8"/></svg>
<div class="a tl" style="left:827px;top:1617px;"><span style="color:#00afff;">~</span><span style="color:#4ab0c8;">/</span><span style="color:#a8a4d0;">U</span><span style="color:#4ab0c8;">/</span><span style="color:#a8a4d0;">2024f</span><span style="color:#4ab0c8;">/</span><span style="color:#4ab0c8;">ct</span><span style="color:#4ab0c8;">/</span><span style="color:#a8a4d0;">la</span><span style="color:#4ab0c8;">/</span><span style="color:#00afff;font-weight:bold;">Compiler</span><span style="color:#4ab0c8;">/</span><span style="color:#00afff;font-weight:bold;">build</span></div>
<svg class="a" style="left:1354px;top:1617px" width="17" height="37" viewBox="0 0 17 37" fill="none"><path d="M0 -1 L16 18.5 L0 38" stroke="#8a8a8a" stroke-width="2.2" fill="none"/></svg>
<div class="a" style="left:1388px;top:1626px;font-family:'Liberation Serif',serif;font-weight:bold;font-size:17px;line-height:20px;color:#5faf00;">git</div>
<svg class="a" style="left:1422px;top:1617px" width="17" height="37" viewBox="0 0 17 37" fill="none"><circle cx="4" cy="10" r="2.6" stroke="#5faf00" stroke-width="2.2"/><circle cx="13" cy="10" r="2.6" stroke="#5faf00" stroke-width="2.2"/><circle cx="4" cy="27" r="2.6" stroke="#5faf00" stroke-width="2.2"/><path d="M4 12.5 V24.5 M13 12.5 C13 19 5 18 4.5 23" stroke="#5faf00" stroke-width="2.2" fill="none"/></svg>
<div class="a tl" style="left:1456px;top:1617px;"><span style="color:#5faf00;">mips</span> <span style="color:#d7af00;">!4</span> <span style="color:#00afff;">?4</span></div>
<div class="a tl" style="left:1677px;top:1617px;color:#2ec48e;">./Compiler</div>
<div class="a" style="left:2068px;top:1617px;width:595px;height:37px;background:#303030;"></div>
<svg class="a" style="left:2051px;top:1617px" width="17" height="37" viewBox="0 0 17 37" fill="none"><path d="M17 0 L1 18.5 L17 37 Z" fill="#303030"/></svg>
<svg class="a" style="left:2085px;top:1617px" width="24" height="37" viewBox="0 0 24 37" fill="none"><path d="M5.5 17 L11 23 L21.5 10.5" stroke="#5faf00" stroke-width="3.8" fill="none"/></svg>
<svg class="a" style="left:2119px;top:1617px" width="17" height="37" viewBox="0 0 17 37" fill="none"><path d="M17 -1 L1 18.5 L17 38" stroke="#8a8a8a" stroke-width="2.2" fill="none"/></svg>
<div class="a tl" style="left:2153px;top:1617px;color:#87afaf;">7.35G</div>
<svg class="a" style="left:2255px;top:1617px" width="17" height="37" viewBox="0 0 17 37" fill="none"><circle cx="8.5" cy="19.5" r="7.5" fill="#87afaf"/><path d="M7.5 23 L11 15" stroke="#303030" stroke-width="2.2"/></svg>
<svg class="a" style="left:2289px;top:1617px" width="17" height="37" viewBox="0 0 17 37" fill="none"><path d="M17 -1 L1 18.5 L17 38" stroke="#8a8a8a" stroke-width="2.2" fill="none"/></svg>
<div class="a tl" style="left:2323px;top:1617px;color:#87afaf;">13:18:50</div>
<svg class="a" style="left:2476px;top:1617px" width="17" height="37" viewBox="0 0 17 37" fill="none"><circle cx="8.5" cy="19.5" r="6.5" stroke="#87afaf" stroke-width="2"/><path d="M8.5 15 V20 L12 22" stroke="#87afaf" stroke-width="1.8" fill="none"/></svg>
<svg class="a" style="left:2510px;top:1617px" width="17" height="37" viewBox="0 0 17 37" fill="none"><path d="M17 -1 L1 18.5 L17 38" stroke="#8a8a8a" stroke-width="2.2" fill="none"/></svg>
<div class="a tl" style="left:2544px;top:1617px;color:#5faf00;">100%</div>
<svg class="a" style="left:2629px;top:1617px" width="17" height="37" viewBox="0 0 17 37" fill="none"><rect x="4.5" y="6.5" width="7" height="3" rx="1" fill="#5faf00"/><rect x="1" y="8.5" width="14.5" height="22.5" rx="2.5" fill="#5faf00"/></svg>
<div class="a" style="left:708px;top:1654px;width:935px;height:37px;background:#303030;"></div>
<svg class="a" style="left:1643px;top:1654px" width="17" height="37" viewBox="0 0 17 37" fill="none"><path d="M0 0 L16 18.5 L0 37 Z" fill="#303030"/></svg>
<svg class="a" style="left:725px;top:1654px" width="17" height="37" viewBox="0 0 17 37" fill="none"><path d="M8.5 8 L16 29 C13 26 11 25 8.5 25 C6 25 4 26 1 29 Z" fill="#f0f0f0"/><path d="M8.5 20 C7.5 20 6.5 21 6 24 L11 24 C10.5 21 9.5 20 8.5 20Z" fill="#303030"/></svg>
<svg class="a" style="left:759px;top:1654px" width="17" height="37" viewBox="0 0 17 37" fill="none"><path d="M0 -1 L16 18.5 L0 38" stroke="#8a8a8a" stroke-width="2.2" fill="none"/></svg>
<svg class="a" style="left:793px;top:1654px" width="18" height="37" viewBox="0 0 18 37" fill="none"><path d="M1 12 H7 L9 14 H15 V18 H4 L1 27 Z" fill="#4aa0c8"/><path d="M4 18 H17 L14 28 H1 Z" fill="#4aa0c8"/></svg>
<div class="a tl" style="left:827px;top:1654px;"><span style="color:#00afff;">~</span><span style="color:#4ab0c8;">/</span><span style="color:#a8a4d0;">U</span><span style="color:#4ab0c8;">/</span><span style="color:#a8a4d0;">2024f</span><span style="color:#4ab0c8;">/</span><span style="color:#4ab0c8;">ct</span><span style="color:#4ab0c8;">/</span><span style="color:#a8a4d0;">la</span><span style="color:#4ab0c8;">/</span><span style="color:#00afff;font-weight:bold;">Compiler</span><span style="color:#4ab0c8;">/</span><span style="color:#00afff;font-weight:bold;">build</span></div>
<svg class="a" style="left:1354px;top:1654px" width="17" height="37" viewBox="0 0 17 37" fill="none"><path d="M0 -1 L16 18.5 L0 38" stroke="#8a8a8a" stroke-width="2.2" fill="none"/></svg>
<div class="a" style="left:1388px;top:1663px;font-family:'Liberation Serif',serif;font-weight:bold;font-size:17px;line-height:20px;color:#5faf00;">git</div>
<svg class="a" style="left:1422px;top:1654px" width="17" height="37" viewBox="0 0 17 37" fill="none"><circle cx="4" cy="10" r="2.6" stroke="#5faf00" stroke-width="2.2"/><circle cx="13" cy="10" r="2.6" stroke="#5faf00" stroke-width="2.2"/><circle cx="4" cy="27" r="2.6" stroke="#5faf00" stroke-width="2.2"/><path d="M4 12.5 V24.5 M13 12.5 C13 19 5 18 4.5 23" stroke="#5faf00" stroke-width="2.2" fill="none"/></svg>
<div class="a tl" style="left:1456px;top:1654px;"><span style="color:#5faf00;">mips</span> <span style="color:#d7af00;">!4</span> <span style="color:#00afff;">?4</span></div>
<div class="a tl" style="left:1677px;top:1654px;color:#2ec48e;">ninja</div>
<div class="a" style="left:2068px;top:1654px;width:595px;height:37px;background:#303030;"></div>
<svg class="a" style="left:2051px;top:1654px" width="17" height="37" viewBox="0 0 17 37" fill="none"><path d="M17 0 L1 18.5 L17 37 Z" fill="#303030"/></svg>
<svg class="a" style="left:2085px;top:1654px" width="24" height="37" viewBox="0 0 24 37" fill="none"><path d="M5.5 17 L11 23 L21.5 10.5" stroke="#5faf00" stroke-width="3.8" fill="none"/></svg>
<svg class="a" style="left:2119px;top:1654px" width="17" height="37" viewBox="0 0 17 37" fill="none"><path d="M17 -1 L1 18.5 L17 38" stroke="#8a8a8a" stroke-width="2.2" fill="none"/></svg>
<div class="a tl" style="left:2153px;top:1654px;color:#87afaf;">7.03G</div>
<svg class="a" style="left:2255px;top:1654px" width="17" height="37" viewBox="0 0 17 37" fill="none"><circle cx="8.5" cy="19.5" r="7.5" fill="#87afaf"/><path d="M7.5 23 L11 15" stroke="#303030" stroke-width="2.2"/></svg>
<svg class="a" style="left:2289px;top:1654px" width="17" height="37" viewBox="0 0 17 37" fill="none"><path d="M17 -1 L1 18.5 L17 38" stroke="#8a8a8a" stroke-width="2.2" fill="none"/></svg>
<div class="a tl" style="left:2323px;top:1654px;color:#87afaf;">13:20:50</div>
<svg class="a" style="left:2476px;top:1654px" width="17" height="37" viewBox="0 0 17 37" fill="none"><circle cx="8.5" cy="19.5" r="6.5" stroke="#87afaf" stroke-width="2"/><path d="M8.5 15 V20 L12 22" stroke="#87afaf" stroke-width="1.8" fill="none"/></svg>
<svg class="a" style="left:2510px;top:1654px" width="17" height="37" viewBox="0 0 17 37" fill="none"><path d="M17 -1 L1 18.5 L17 38" stroke="#8a8a8a" stroke-width="2.2" fill="none"/></svg>
<div class="a tl" style="left:2544px;top:1654px;color:#5faf00;">100%</div>
<svg class="a" style="left:2629px;top:1654px" width="17" height="37" viewBox="0 0 17 37" fill="none"><rect x="4.5" y="6.5" width="7" height="3" rx="1" fill="#5faf00"/><rect x="1" y="8.5" width="14.5" height="22.5" rx="2.5" fill="#5faf00"/></svg>
<div class="a tl" style="left:708px;top:1691px;"><span style="color:#cccccc;">[0/2] Re-checking globbed directories...</span></div>
<div class="a tl" style="left:708px;top:1728px;"><span style="color:#cccccc;">[8/9] Linking CXX executable Compiler</span></div>
<div class="a" style="left:708px;top:1765px;width:935px;height:37px;background:#303030;"></div>
<svg class="a" style="left:1643px;top:1765px" width="17" height="37" viewBox="0 0 17 37" fill="none"><path d="M0 0 L16 18.5 L0 37 Z" fill="#303030"/></svg>
<svg class="a" style="left:725px;top:1765px" width="17" height="37" viewBox="0 0 17 37" fill="none"><path d="M8.5 8 L16 29 C13 26 11 25 8.5 25 C6 25 4 26 1 29 Z" fill="#f0f0f0"/><path d="M8.5 20 C7.5 20 6.5 21 6 24 L11 24 C10.5 21 9.5 20 8.5 20Z" fill="#303030"/></svg>
<svg class="a" style="left:759px;top:1765px" width="17" height="37" viewBox="0 0 17 37" fill="none"><path d="M0 -1 L16 18.5 L0 38" stroke="#8a8a8a" stroke-width="2.2" fill="none"/></svg>
<svg class="a" style="left:793px;top:1765px" width="18" height="37" viewBox="0 0 18 37" fill="none"><path d="M1 12 H7 L9 14 H15 V18 H4 L1 27 Z" fill="#4aa0c8"/><path d="M4 18 H17 L14 28 H1 Z" fill="#4aa0c8"/></svg>
<div class="a tl" style="left:827px;top:1765px;"><span style="color:#00afff;">~</span><span style="color:#4ab0c8;">/</span><span style="color:#a8a4d0;">U</span><span style="color:#4ab0c8;">/</span><span style="color:#a8a4d0;">2024f</span><span style="color:#4ab0c8;">/</span><span style="color:#4ab0c8;">ct</span><span style="color:#4ab0c8;">/</span><span style="color:#a8a4d0;">la</span><span style="color:#4ab0c8;">/</span><span style="color:#00afff;font-weight:bold;">Compiler</span><span style="color:#4ab0c8;">/</span><span style="color:#00afff;font-weight:bold;">build</span></div>
<svg class="a" style="left:1354px;top:1765px" width="17" height="37" viewBox="0 0 17 37" fill="none"><path d="M0 -1 L16 18.5 L0 38" stroke="#8a8a8a" stroke-width="2.2" fill="none"/></svg>
<div class="a" style="left:1388px;top:1774px;font-family:'Liberation Serif',serif;font-weight:bold;font-size:17px;line-height:20px;color:#5faf00;">git</div>
<svg class="a" style="left:1422px;top:1765px" width="17" height="37" viewBox="0 0 17 37" fill="none"><circle cx="4" cy="10" r="2.6" stroke="#5faf00" stroke-width="2.2"/><circle cx="13" cy="10" r="2.6" stroke="#5faf00" stroke-width="2.2"/><circle cx="4" cy="27" r="2.6" stroke="#5faf00" stroke-width="2.2"/><path d="M4 12.5 V24.5 M13 12.5 C13 19 5 18 4.5 23" stroke="#5faf00" stroke-width="2.2" fill="none"/></svg>
<div class="a tl" style="left:1456px;top:1765px;"><span style="color:#5faf00;">mips</span> <span style="color:#d7af00;">!5</span> <span style="color:#00afff;">?4</span></div>
<div class="a tl" style="left:1677px;top:1765px;color:#2ec48e;">./Compiler</div>
<div class="a" style="left:1949px;top:1765px;width:714px;height:37px;background:#303030;"></div>
<svg class="a" style="left:1932px;top:1765px" width="17" height="37" viewBox="0 0 17 37" fill="none"><path d="M17 0 L1 18.5 L17 37 Z" fill="#303030"/></svg>
<svg class="a" style="left:1966px;top:1765px" width="24" height="37" viewBox="0 0 24 37" fill="none"><path d="M5.5 17 L11 23 L21.5 10.5" stroke="#5faf00" stroke-width="3.8" fill="none"/></svg>
<svg class="a" style="left:2000px;top:1765px" width="17" height="37" viewBox="0 0 17 37" fill="none"><path d="M17 -1 L1 18.5 L17 38" stroke="#8a8a8a" stroke-width="2.2" fill="none"/></svg>
<div class="a tl" style="left:2034px;top:1765px;color:#b0b0b0;">8s</div>
<svg class="a" style="left:2085px;top:1765px" width="18" height="37" viewBox="0 0 18 37" fill="none"><rect x="1.5" y="9" width="15" height="2.6" fill="#b0b0b0"/><rect x="1.5" y="28" width="15" height="3" fill="#b0b0b0"/><path d="M3.8 11 C3.8 16 8.5 18 9 19.5 C9.5 18 14.2 16 14.2 11" stroke="#b0b0b0" stroke-width="2" fill="none"/><path d="M9 19.5 C8 21 3.5 23 3.5 28 H14.5 C14.5 23 10 21 9 19.5 Z" fill="#b0b0b0"/></svg>
<svg class="a" style="left:2119px;top:1765px" width="17" height="37" viewBox="0 0 17 37" fill="none"><path d="M17 -1 L1 18.5 L17 38" stroke="#8a8a8a" stroke-width="2.2" fill="none"/></svg>
<div class="a tl" style="left:2153px;top:1765px;color:#87afaf;">7.05G</div>
<svg class="a" style="left:2255px;top:1765px" width="17" height="37" viewBox="0 0 17 37" fill="none"><circle cx="8.5" cy="19.5" r="7.5" fill="#87afaf"/><path d="M7.5 23 L11 15" stroke="#303030" stroke-width="2.2"/></svg>
<svg class="a" style="left:2289px;top:1765px" width="17" height="37" viewBox="0 0 17 37" fill="none"><path d="M17 -1 L1 18.5 L17 38" stroke="#8a8a8a" stroke-width="2.2" fill="none"/></svg>
<div class="a tl" style="left:2323px;top:1765px;color:#87afaf;">13:24:45</div>
<svg class="a" style="left:2476px;top:1765px" width="17" height="37" viewBox="0 0 17 37" fill="none"><circle cx="8.5" cy="19.5" r="6.5" stroke="#87afaf" stroke-width="2"/><path d="M8.5 15 V20 L12 22" stroke="#87afaf" stroke-width="1.8" fill="none"/></svg>
<svg class="a" style="left:2510px;top:1765px" width="17" height="37" viewBox="0 0 17 37" fill="none"><path d="M17 -1 L1 18.5 L17 38" stroke="#8a8a8a" stroke-width="2.2" fill="none"/></svg>
<div class="a tl" style="left:2544px;top:1765px;color:#5faf00;">100%</div>
<svg class="a" style="left:2629px;top:1765px" width="17" height="37" viewBox="0 0 17 37" fill="none"><rect x="4.5" y="6.5" width="7" height="3" rx="1" fill="#5faf00"/><rect x="1" y="8.5" width="14.5" height="22.5" rx="2.5" fill="#5faf00"/></svg>
<div class="a" style="left:708px;top:1802px;width:935px;height:37px;background:#303030;"></div>
<svg class="a" style="left:1643px;top:1802px" width="17" height="37" viewBox="0 0 17 37" fill="none"><path d="M0 0 L16 18.5 L0 37 Z" fill="#303030"/></svg>
<svg class="a" style="left:725px;top:1802px" width="17" height="37" viewBox="0 0 17 37" fill="none"><path d="M8.5 8 L16 29 C13 26 11 25 8.5 25 C6 25 4 26 1 29 Z" fill="#f0f0f0"/><path d="M8.5 20 C7.5 20 6.5 21 6 24 L11 24 C10.5 21 9.5 20 8.5 20Z" fill="#303030"/></svg>
<svg class="a" style="left:759px;top:1802px" width="17" height="37" viewBox="0 0 17 37" fill="none"><path d="M0 -1 L16 18.5 L0 38" stroke="#8a8a8a" stroke-width="2.2" fill="none"/></svg>
<svg class="a" style="left:793px;top:1802px" width="18" height="37" viewBox="0 0 18 37" fill="none"><path d="M1 12 H7 L9 14 H15 V18 H4 L1 27 Z" fill="#4aa0c8"/><path d="M4 18 H17 L14 28 H1 Z" fill="#4aa0c8"/></svg>
<div class="a tl" style="left:827px;top:1802px;"><span style="color:#00afff;">~</span><span style="color:#4ab0c8;">/</span><span style="color:#a8a4d0;">U</span><span style="color:#4ab0c8;">/</span><span style="color:#a8a4d0;">2024f</span><span style="color:#4ab0c8;">/</span><span style="color:#4ab0c8;">ct</span><span style="color:#4ab0c8;">/</span><span style="color:#a8a4d0;">la</span><span style="color:#4ab0c8;">/</span><span style="color:#00afff;font-weight:bold;">Compiler</span><span style="color:#4ab0c8;">/</span><span style="color:#00afff;font-weight:bold;">build</span></div>
<svg class="a" style="left:1354px;top:1802px" width="17" height="37" viewBox="0 0 17 37" fill="none"><path d="M0 -1 L16 18.5 L0 38" stroke="#8a8a8a" stroke-width="2.2" fill="none"/></svg>
<div class="a" style="left:1388px;top:1811px;font-family:'Liberation Serif',serif;font-weight:bold;font-size:17px;line-height:20px;color:#5faf00;">git</div>
<svg class="a" style="left:1422px;top:1802px" width="17" height="37" viewBox="0 0 17 37" fill="none"><circle cx="4" cy="10" r="2.6" stroke="#5faf00" stroke-width="2.2"/><circle cx="13" cy="10" r="2.6" stroke="#5faf00" stroke-width="2.2"/><circle cx="4" cy="27" r="2.6" stroke="#5faf00" stroke-width="2.2"/><path d="M4 12.5 V24.5 M13 12.5 C13 19 5 18 4.5 23" stroke="#5faf00" stroke-width="2.2" fill="none"/></svg>
<div class="a tl" style="left:1456px;top:1802px;"><span style="color:#5faf00;">mips</span> <span style="color:#d7af00;">!5</span> <span style="color:#00afff;">?4</span></div>
<div class="a tl" style="left:1677px;top:1802px;color:#2ec48e;">./IRBuilder</div>
<div class="a" style="left:2068px;top:1802px;width:595px;height:37px;background:#303030;"></div>
<svg class="a" style="left:2051px;top:1802px" width="17" height="37" viewBox="0 0 17 37" fill="none"><path d="M17 0 L1 18.5 L17 37 Z" fill="#303030"/></svg>
<svg class="a" style="left:2085px;top:1802px" width="24" height="37" viewBox="0 0 24 37" fill="none"><path d="M5.5 17 L11 23 L21.5 10.5" stroke="#5faf00" stroke-width="3.8" fill="none"/></svg>
<svg class="a" style="left:2119px;top:1802px" width="17" height="37" viewBox="0 0 17 37" fill="none"><path d="M17 -1 L1 18.5 L17 38" stroke="#8a8a8a" stroke-width="2.2" fill="none"/></svg>
<div class="a tl" style="left:2153px;top:1802px;color:#87afaf;">7.09G</div>
<svg class="a" style="left:2255px;top:1802px" width="17" height="37" viewBox="0 0 17 37" fill="none"><circle cx="8.5" cy="19.5" r="7.5" fill="#87afaf"/><path d="M7.5 23 L11 15" stroke="#303030" stroke-width="2.2"/></svg>
<svg class="a" style="left:2289px;top:1802px" width="17" height="37" viewBox="0 0 17 37" fill="none"><path d="M17 -1 L1 18.5 L17 38" stroke="#8a8a8a" stroke-width="2.2" fill="none"/></svg>
<div class="a tl" style="left:2323px;top:1802px;color:#87afaf;">13:24:46</div>
<svg class="a" style="left:2476px;top:1802px" width="17" height="37" viewBox="0 0 17 37" fill="none"><circle cx="8.5" cy="19.5" r="6.5" stroke="#87afaf" stroke-width="2"/><path d="M8.5 15 V20 L12 22" stroke="#87afaf" stroke-width="1.8" fill="none"/></svg>
<svg class="a" style="left:2510px;top:1802px" width="17" height="37" viewBox="0 0 17 37" fill="none"><path d="M17 -1 L1 18.5 L17 38" stroke="#8a8a8a" stroke-width="2.2" fill="none"/></svg>
<div class="a tl" style="left:2544px;top:1802px;color:#5faf00;">100%</div>
<svg class="a" style="left:2629px;top:1802px" width="17" height="37" viewBox="0 0 17 37" fill="none"><rect x="4.5" y="6.5" width="7" height="3" rx="1" fill="#5faf00"/><rect x="1" y="8.5" width="14.5" height="22.5" rx="2.5" fill="#5faf00"/></svg>
<div class="a" style="left:708px;top:1839px;width:935px;height:37px;background:#303030;"></div>
<svg class="a" style="left:1643px;top:1839px" width="17" height="37" viewBox="0 0 17 37" fill="none"><path d="M0 0 L16 18.5 L0 37 Z" fill="#303030"/></svg>
<svg class="a" style="left:725px;top:1839px" width="17" height="37" viewBox="0 0 17 37" fill="none"><path d="M8.5 8 L16 29 C13 26 11 25 8.5 25 C6 25 4 26 1 29 Z" fill="#f0f0f0"/><path d="M8.5 20 C7.5 20 6.5 21 6 24 L11 24 C10.5 21 9.5 20 8.5 20Z" fill="#303030"/></svg>
<svg class="a" style="left:759px;top:1839px" width="17" height="37" viewBox="0 0 17 37" fill="none"><path d="M0 -1 L16 18.5 L0 38" stroke="#8a8a8a" stroke-width="2.2" fill="none"/></svg>
<svg class="a" style="left:793px;top:1839px" width="18" height="37" viewBox="0 0 18 37" fill="none"><path d="M1 12 H7 L9 14 H15 V18 H4 L1 27 Z" fill="#4aa0c8"/><path d="M4 18 H17 L14 28 H1 Z" fill="#4aa0c8"/></svg>
<div class="a tl" style="left:827px;top:1839px;"><span style="color:#00afff;">~</span><span style="color:#4ab0c8;">/</span><span style="color:#a8a4d0;">U</span><span style="color:#4ab0c8;">/</span><span style="color:#a8a4d0;">2024f</span><span style="color:#4ab0c8;">/</span><span style="color:#4ab0c8;">ct</span><span style="color:#4ab0c8;">/</span><span style="color:#a8a4d0;">la</span><span style="color:#4ab0c8;">/</span><span style="color:#00afff;font-weight:bold;">Compiler</span><span style="color:#4ab0c8;">/</span><span style="color:#00afff;font-weight:bold;">build</span></div>
<svg class="a" style="left:1354px;top:1839px" width="17" height="37" viewBox="0 0 17 37" fill="none"><path d="M0 -1 L16 18.5 L0 38" stroke="#8a8a8a" stroke-width="2.2" fill="none"/></svg>
<div class="a" style="left:1388px;top:1848px;font-family:'Liberation Serif',serif;font-weight:bold;font-size:17px;line-height:20px;color:#5faf00;">git</div>
<svg class="a" style="left:1422px;top:1839px" width="17" height="37" viewBox="0 0 17 37" fill="none"><circle cx="4" cy="10" r="2.6" stroke="#5faf00" stroke-width="2.2"/><circle cx="13" cy="10" r="2.6" stroke="#5faf00" stroke-width="2.2"/><circle cx="4" cy="27" r="2.6" stroke="#5faf00" stroke-width="2.2"/><path d="M4 12.5 V24.5 M13 12.5 C13 19 5 18 4.5 23" stroke="#5faf00" stroke-width="2.2" fill="none"/></svg>
<div class="a tl" style="left:1456px;top:1839px;"><span style="color:#5faf00;">mips</span> <span style="color:#d7af00;">!5</span> <span style="color:#00afff;">?4</span></div>
<div class="a" style="left:1677px;top:1840px;width:17px;height:35px;box-sizing:border-box;border:2px solid #d4d4d4;"></div>
<div class="a" style="left:2068px;top:1839px;width:595px;height:37px;background:#303030;"></div>
<svg class="a" style="left:2051px;top:1839px" width="17" height="37" viewBox="0 0 17 37" fill="none"><path d="M17 0 L1 18.5 L17 37 Z" fill="#303030"/></svg>
<svg class="a" style="left:2085px;top:1839px" width="24" height="37" viewBox="0 0 24 37" fill="none"><path d="M5.5 17 L11 23 L21.5 10.5" stroke="#5faf00" stroke-width="3.8" fill="none"/></svg>
<svg class="a" style="left:2119px;top:1839px" width="17" height="37" viewBox="0 0 17 37" fill="none"><path d="M17 -1 L1 18.5 L17 38" stroke="#8a8a8a" stroke-width="2.2" fill="none"/></svg>
<div class="a tl" style="left:2153px;top:1839px;color:#87afaf;">7.15G</div>
<svg class="a" style="left:2255px;top:1839px" width="17" height="37" viewBox="0 0 17 37" fill="none"><circle cx="8.5" cy="19.5" r="7.5" fill="#87afaf"/><path d="M7.5 23 L11 15" stroke="#303030" stroke-width="2.2"/></svg>
<svg class="a" style="left:2289px;top:1839px" width="17" height="37" viewBox="0 0 17 37" fill="none"><path d="M17 -1 L1 18.5 L17 38" stroke="#8a8a8a" stroke-width="2.2" fill="none"/></svg>
<div class="a tl" style="left:2323px;top:1839px;color:#87afaf;">13:25:23</div>
<svg class="a" style="left:2476px;top:1839px" width="17" height="37" viewBox="0 0 17 37" fill="none"><circle cx="8.5" cy="19.5" r="6.5" stroke="#87afaf" stroke-width="2"/><path d="M8.5 15 V20 L12 22" stroke="#87afaf" stroke-width="1.8" fill="none"/></svg>
<svg class="a" style="left:2510px;top:1839px" width="17" height="37" viewBox="0 0 17 37" fill="none"><path d="M17 -1 L1 18.5 L17 38" stroke="#8a8a8a" stroke-width="2.2" fill="none"/></svg>
<div class="a tl" style="left:2544px;top:1839px;color:#5faf00;">100%</div>
<svg class="a" style="left:2629px;top:1839px" width="17" height="37" viewBox="0 0 17 37" fill="none"><rect x="4.5" y="6.5" width="7" height="3" rx="1" fill="#5faf00"/><rect x="1" y="8.5" width="14.5" height="22.5" rx="2.5" fill="#5faf00"/></svg>
<div class="a" style="left:0px;top:1876px;width:3072px;height:44px;background:#181818;"></div>
<div class="a" style="left:0px;top:1876px;width:3072px;height:2px;background:#2b2b2b;"></div>
<div class="a" style="left:0px;top:1878px;width:68px;height:42px;background:#0078d4;"></div>
<svg class="a" style="left:22px;top:1886px;" width="26" height="24" viewBox="0 0 26 24" fill="none"><path d="M2 22 L11 13 L5 7 M24 2 L15 11 L21 17" stroke="#ffffff" stroke-width="2.2" fill="none"/></svg>
<svg class="a" style="left:81px;top:1885px;" width="24" height="26" viewBox="0 0 24 26" fill="none"><circle cx="5" cy="4.5" r="3.3" stroke="#cccccc" stroke-width="2"/><circle cx="5" cy="21.5" r="3.3" stroke="#cccccc" stroke-width="2"/><circle cx="19" cy="8" r="3.3" stroke="#cccccc" stroke-width="2"/><path d="M5 8 V18 M19 11.5 C19 17 8 15 6 18.5" stroke="#cccccc" stroke-width="2" fill="none"/></svg>
<div class="a t" style="top:1885.18px;font-size:24px;line-height:24px;color:#cccccc;left:114px;transform:scaleX(1.124789102043367);transform-origin:left center;">mips*</div>
<svg class="a" style="left:195px;top:1886px;" width="27" height="22" viewBox="0 0 27 22" fill="none"><path d="M7 17 H5 a4.5 4.5 0 0 1 -0.5 -9 a7 7 0 0 1 13.5 -2 a5.5 5.5 0 0 1 3.5 11 H19" stroke="#cccccc" stroke-width="2" fill="none"/><path d="M13 21 V10 M9 14 L13 10 L17 14" stroke="#cccccc" stroke-width="2" fill="none"/></svg>
<svg class="a" style="left:251px;top:1884px;" width="26" height="28" viewBox="0 0 26 28" fill="none"><path d="M5 1 V27 M21 1 V27" stroke="#cccccc" stroke-width="2"/><circle cx="5" cy="12" r="3.5" stroke="#cccccc" stroke-width="2" fill="#181818"/><circle cx="21" cy="20" r="3.5" stroke="#cccccc" stroke-width="2" fill="#181818"/><path d="M13 3 V25" stroke="#cccccc" stroke-width="2"/><circle cx="13" cy="22" r="3.5" stroke="#cccccc" stroke-width="2" fill="#181818"/></svg>
<svg class="a" style="left:310px;top:1884px;" width="28" height="28" viewBox="0 0 28 28" fill="none"><path d="M9 19 L4 14 L12 6 C16 2 22 2 25 3 C26 6 26 12 22 16 L14 24 Z" stroke="#cccccc" stroke-width="2" fill="none" stroke-linejoin="round"/><path d="M4 14 L2 8 L8 8 M14 24 L20 26 L20 20 M9 19 L3 25" stroke="#cccccc" stroke-width="2" fill="none"/></svg>
<svg class="a" style="left:339px;top:1884px;" width="28" height="28" viewBox="0 0 28 28" fill="none"><path d="M6 22 L2 26 M22 6 L26 2 M9 11 L17 19 M11 9 L15 5 a5 5 0 0 1 8 8 L19 17 Z M17 19 L13 23 a5 5 0 0 1 -8 -8 L9 11" stroke="#cccccc" stroke-width="2" fill="none"/></svg>
<div class="a t" style="top:1885.18px;font-size:24px;line-height:24px;color:#cccccc;left:372px;transform:scaleX(1.0482445061884313);transform-origin:left center;">Launchpad</div>
<svg class="a" style="left:530px;top:1886px;" width="25" height="25" viewBox="0 0 25 25" fill="none"><circle cx="12.5" cy="12.5" r="10.5" stroke="#cccccc" stroke-width="2"/><path d="M8 8 L17 17 M17 8 L8 17" stroke="#cccccc" stroke-width="2"/></svg>
<div class="a t" style="top:1885.18px;font-size:24px;line-height:24px;color:#cccccc;left:563px;">0</div>
<svg class="a" style="left:585px;top:1885px;" width="26" height="25" viewBox="0 0 26 25" fill="none"><path d="M13 2 L24.5 23 H1.5 Z" stroke="#cccccc" stroke-width="2" fill="none" stroke-linejoin="round"/><path d="M13 9 V16 M13 18.5 V20.5" stroke="#cccccc" stroke-width="2.2"/></svg>
<div class="a t" style="top:1885.18px;font-size:24px;line-height:24px;color:#cccccc;left:618px;transform:scaleX(1.0364958946021041);transform-origin:left center;">180</div>
<svg class="a" style="left:693px;top:1884px;" width="26" height="28" viewBox="0 0 26 28" fill="none"><circle cx="13" cy="11" r="2.5" fill="#cccccc"/><path d="M8 5 a7.5 7.5 0 0 0 0 12 M18 5 a7.5 7.5 0 0 1 0 12 M4.5 2 a12 12 0 0 0 0 18 M21.5 2 a12 12 0 0 1 0 18 M13 13 L8 27 M13 13 L18 27 M10 21 H16" stroke="#cccccc" stroke-width="2" fill="none"/></svg>
<div class="a t" style="top:1885.18px;font-size:24px;line-height:24px;color:#cccccc;left:726px;">0</div>
<svg class="a" style="left:768px;top:1884px;" width="30" height="28" viewBox="0 0 30 28" fill="none"><path d="M12 2 L28 13 L18 20" stroke="#cccccc" stroke-width="2" fill="none" stroke-linejoin="round"/><path d="M12 2 V10" stroke="#cccccc" stroke-width="2"/><ellipse cx="9" cy="20" rx="5" ry="6.5" stroke="#cccccc" stroke-width="2"/><path d="M2 18 H16 M2 23 H16" stroke="#cccccc" stroke-width="1.8"/></svg>
<svg class="a" style="left:832px;top:1884px;" width="24" height="28" viewBox="0 0 24 28" fill="none"><ellipse cx="12" cy="5.5" rx="9" ry="3.5" stroke="#cccccc" stroke-width="2"/><path d="M3 5.5 V22.5 C3 27 21 27 21 22.5 V5.5" stroke="#cccccc" stroke-width="2" fill="none"/></svg>
<div class="a t" style="top:1885.18px;font-size:24px;line-height:24px;color:#cccccc;left:866px;transform:scaleX(1.0415617832969737);transform-origin:left center;">Connect</div>
<div class="a t" style="top:1885.18px;font-size:24px;line-height:24px;color:#cccccc;left:991px;transform:scaleX(1.0649864096861874);transform-origin:left center;">clangd: idle</div>
<svg class="a" style="left:1152px;top:1884px;" width="26" height="26" viewBox="0 0 26 26" fill="none"><path d="M11 1 H15 L15.5 4.5 L19 6 L22 4 L24.5 6.5 L22.5 9.5 L24 13 L25 13 V15 L21.5 15.5 L20 19 L22 22 L19.5 24.5 L16.5 22.5 L15 23 L15 25 H11 L10.5 21.5 L7 20 L4 22 L1.5 19.5 L3.5 16.5 L2 13 L1 13 V11 L4.5 10.5 L6 7 L4 4 L6.5 1.5 L9.5 3.5 L11 3 Z" stroke="#cccccc" stroke-width="2" fill="none" stroke-linejoin="round"/><circle cx="13" cy="13" r="4" stroke="#cccccc" stroke-width="2"/></svg>
<div class="a t" style="top:1885.18px;font-size:24px;line-height:24px;color:#cccccc;left:1186px;transform:scaleX(1.0961984400252969);transform-origin:left center;">Build</div>
<svg class="a" style="left:1276px;top:1883px;" width="26" height="28" viewBox="0 0 26 28" fill="none"><ellipse cx="13" cy="16" rx="7" ry="9" stroke="#cccccc" stroke-width="2"/><path d="M9 7 a4 3.5 0 0 1 8 0 M2 15 H6 M20 15 H24 M3 4 L7 8 M23 4 L19 8 M3 27 L7 23 M23 27 L19 23" stroke="#cccccc" stroke-width="2" fill="none"/></svg>
<svg class="a" style="left:1338px;top:1885px;" width="22" height="26" viewBox="0 0 22 26" fill="none"><path d="M3 2 L20 13 L3 24 Z" stroke="#cccccc" stroke-width="2" fill="none" stroke-linejoin="round"/></svg>
<div class="a t" style="top:1885.18px;font-size:24px;line-height:24px;color:#cccccc;left:1395px;transform:scaleX(1.048710739432389);transform-origin:left center;">Git Graph</div>
<div class="a t" style="top:1885.18px;font-size:24px;line-height:24px;color:#cccccc;left:1999px;transform:scaleX(1.0135105626952838);transform-origin:left center;">Ln 307, Col 29 (140 selected)</div>
<div class="a t" style="top:1885.18px;font-size:24px;line-height:24px;color:#cccccc;left:2349.8px;transform:scaleX(0.9856763055877633);transform-origin:left center;">Spaces: 2</div>
<div class="a t" style="top:1885.18px;font-size:24px;line-height:24px;color:#cccccc;left:2486px;transform:scaleX(0.9634123919838206);transform-origin:left center;">UTF-8</div>
<div class="a t" style="top:1885.18px;font-size:24px;line-height:24px;color:#cccccc;left:2584px;transform:scaleX(0.9105516871987146);transform-origin:left center;">LF</div>
<div class="a t" style="top:1885.18px;font-size:24px;line-height:24px;color:#cccccc;left:2640px;transform:scaleX(0.9500192869344796);transform-origin:left center;">C++</div>
<svg class="a" style="left:2716px;top:1884px;" width="24" height="28" viewBox="0 0 24 28" fill="none"><circle cx="12" cy="11" r="2.5" fill="#cccccc"/><path d="M7.5 16 a6.5 6.5 0 1 1 9 0 M4.5 19 a10.5 10.5 0 1 1 15 0" stroke="#cccccc" stroke-width="2" fill="none"/><path d="M12 14 V27" stroke="#cccccc" stroke-width="2.5"/></svg>
<div class="a t" style="top:1885.18px;font-size:24px;line-height:24px;color:#cccccc;left:2749px;transform:scaleX(0.9975062344139651);transform-origin:left center;">Go Live</div>
<svg class="a" style="left:2863px;top:1885px;" width="26" height="26" viewBox="0 0 26 26" fill="none"><circle cx="13" cy="13" r="11" stroke="#cccccc" stroke-width="2"/><path d="M5.5 20.5 L20.5 5.5" stroke="#cccccc" stroke-width="2"/></svg>
<div class="a t" style="top:1885.18px;font-size:24px;line-height:24px;color:#cccccc;left:2898px;transform:scaleX(1.0924193209547357);transform-origin:left center;">Prettier</div>
<svg class="a" style="left:3015px;top:1883px;" width="28" height="28" viewBox="0 0 28 28" fill="none"><path d="M4 22 H22 L19.5 18 V12 a6.5 6.5 0 0 0 -13 0 V18 Z" stroke="#cccccc" stroke-width="2" fill="none" stroke-linejoin="round"/><path d="M10 25 a3 3 0 0 0 6 0" stroke="#cccccc" stroke-width="2" fill="none"/><circle cx="22" cy="5.5" r="4.5" fill="#cccccc"/></svg>
</body></html>
